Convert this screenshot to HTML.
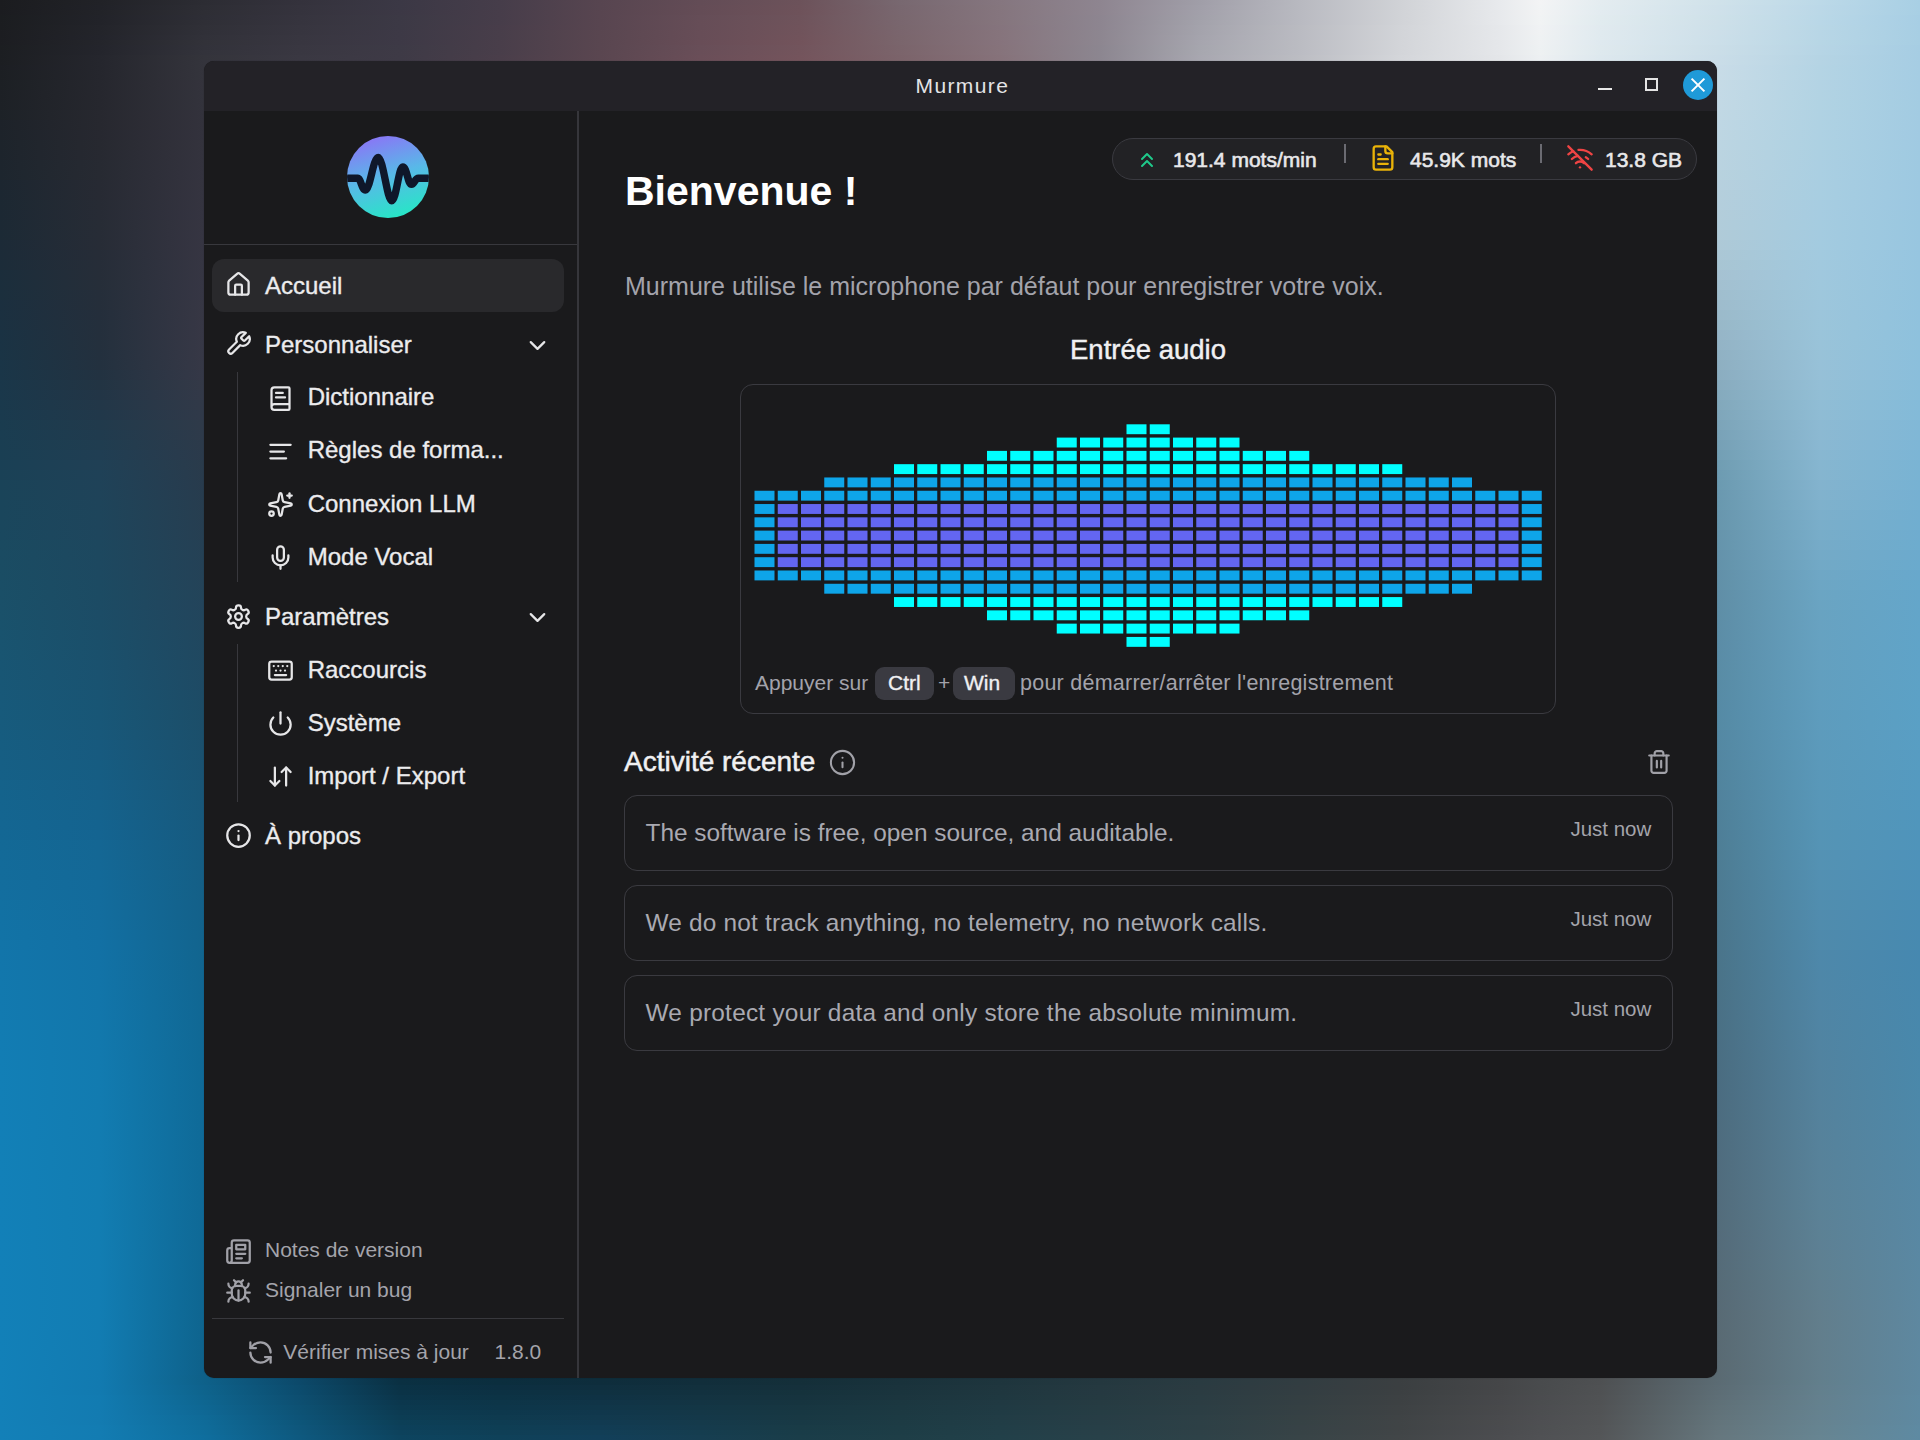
<!DOCTYPE html>
<html><head><meta charset="utf-8">
<style>
html,body{margin:0;padding:0;width:1920px;height:1440px;overflow:hidden;}
body{position:relative;font-family:"Liberation Sans",sans-serif;background:#1b1c1f;}
#bgm{position:absolute;left:0;top:0;width:1920px;height:1440px;}
#bgm div{position:absolute;left:0;width:1920px;}
.abs{position:absolute;}
.t{position:absolute;white-space:nowrap;line-height:1;}
.m{-webkit-text-stroke:0.35px currentColor;}
.sb{-webkit-text-stroke:0.6px currentColor;}
#win{position:absolute;left:204px;top:61px;width:1513px;height:1317px;background:#1a1a1c;border-radius:10px;overflow:hidden;
box-shadow:0 0 1px rgba(0,0,0,0.4);}
#titlebar{position:absolute;left:0;top:0;width:1513px;height:50px;background:#232227;}
svg.ic{position:absolute;fill:none;stroke-linecap:round;stroke-linejoin:round;}
</style></head>
<body>
<div id="bgm"><div style="top:0px;height:5px;background:linear-gradient(90deg,#1b1c1f 0px,#212227 100px,#2c2c33 204px,#34323c 300px,#3b3845 400px,#463d4a 500px,#574550 600px,#634c56 700px,#6c525a 800px,#786870 900px,#85767f 1000px,#8e8590 1100px,#a09ea8 1200px,#b8b9c0 1300px,#d0d2d6 1400px,#e8eaed 1500px,#f3f4f5 1540px,#e4ecf0 1600px,#d0e2ea 1717px,#bcd9e8 1820px,#a8cfe4 1920px)"></div><div style="top:5px;height:5px;background:linear-gradient(90deg,#1b1c1f 0px,#212228 100px,#2d2d34 204px,#35333d 300px,#3b3845 400px,#463d4a 500px,#574550 600px,#644c56 700px,#6d525a 800px,#78676f 900px,#85767e 1000px,#8e8590 1100px,#a19fa9 1200px,#b8b9c0 1300px,#d0d2d6 1400px,#e8eaed 1500px,#f2f4f5 1540px,#e3ecf0 1600px,#cfe1ea 1717px,#bbd8e8 1820px,#a8cfe4 1920px)"></div><div style="top:10px;height:5px;background:linear-gradient(90deg,#1b1c20 0px,#222328 100px,#2e2e35 204px,#35333d 300px,#3c3845 400px,#473d4a 500px,#584550 600px,#644c56 700px,#6e525a 800px,#79676f 900px,#85757e 1000px,#8e8590 1100px,#a2a0aa 1200px,#b9bac1 1300px,#d1d3d7 1400px,#e7e9ec 1500px,#f2f3f4 1540px,#e3ebf0 1600px,#cfe1ea 1717px,#bbd8e7 1820px,#a8cfe4 1920px)"></div><div style="top:15px;height:5px;background:linear-gradient(90deg,#1b1d20 0px,#222329 100px,#2e2e36 204px,#36343e 300px,#3c3945 400px,#473d4a 500px,#584550 600px,#654d57 700px,#6e535b 800px,#79676e 900px,#85757e 1000px,#8d8590 1100px,#a2a1aa 1200px,#b9bac1 1300px,#d1d3d7 1400px,#e7e9ec 1500px,#f1f3f4 1540px,#e2ebef 1600px,#cee1e9 1717px,#bad8e7 1820px,#a7cee4 1920px)"></div><div style="top:20px;height:5px;background:linear-gradient(90deg,#1b1d20 0px,#222329 100px,#2f2f36 204px,#36343e 300px,#3c3945 400px,#473d4a 500px,#584550 600px,#664d57 700px,#6f535b 800px,#79666e 900px,#85757d 1000px,#8d8590 1100px,#a3a2ab 1200px,#b9bac1 1300px,#d1d3d7 1400px,#e7e9ec 1500px,#f1f3f4 1540px,#e1ebef 1600px,#cee0e9 1717px,#b9d7e7 1820px,#a7cee4 1920px)"></div><div style="top:25px;height:5px;background:linear-gradient(90deg,#1b1d20 0px,#23242a 100px,#303037 204px,#37353f 300px,#3c3945 400px,#483d4a 500px,#584550 600px,#664d57 700px,#70535b 800px,#79666d 900px,#85747d 1000px,#8d8590 1100px,#a4a3ac 1200px,#babbc1 1300px,#d2d4d8 1400px,#e6e8eb 1500px,#f0f2f4 1540px,#e1eaef 1600px,#cde0e9 1717px,#b9d7e6 1820px,#a7cee4 1920px)"></div><div style="top:30px;height:5px;background:linear-gradient(90deg,#1c1d21 0px,#23242a 100px,#303038 204px,#37353f 300px,#3d3946 400px,#483e4a 500px,#594650 600px,#674d57 700px,#70535b 800px,#7a656d 900px,#86747c 1000px,#8d8690 1100px,#a4a3ac 1200px,#babbc2 1300px,#d2d4d8 1400px,#e6e8eb 1500px,#f0f2f3 1540px,#e0eaef 1600px,#cddfe9 1717px,#b8d6e6 1820px,#a7cee3 1920px)"></div><div style="top:35px;height:5px;background:linear-gradient(90deg,#1c1d21 0px,#23242b 100px,#313139 204px,#383640 300px,#3d3946 400px,#483e4a 500px,#594650 600px,#674d57 700px,#71535b 800px,#7a656c 900px,#86747c 1000px,#8d8690 1100px,#a5a4ad 1200px,#babbc2 1300px,#d2d4d8 1400px,#e6e8eb 1500px,#eff2f3 1540px,#e0eaef 1600px,#ccdfe9 1717px,#b8d6e6 1820px,#a7cee3 1920px)"></div><div style="top:40px;height:5px;background:linear-gradient(90deg,#1c1d21 0px,#24252b 100px,#323239 204px,#383640 300px,#3d3946 400px,#493e4a 500px,#594650 600px,#684d57 700px,#72535b 800px,#7a656c 900px,#86737c 1000px,#8d8690 1100px,#a6a5ae 1200px,#bbbcc2 1300px,#d3d5d9 1400px,#e5e7ea 1500px,#eff1f3 1540px,#dfe9ef 1600px,#ccdfe9 1717px,#b7d6e5 1820px,#a7cee3 1920px)"></div><div style="top:45px;height:5px;background:linear-gradient(90deg,#1c1e21 0px,#24252c 100px,#32323a 204px,#393741 300px,#3d3a46 400px,#493e4a 500px,#594650 600px,#684e58 700px,#72545c 800px,#7a646b 900px,#86737b 1000px,#8c8690 1100px,#a6a6ae 1200px,#bbbcc2 1300px,#d3d5d9 1400px,#e5e7ea 1500px,#eef1f3 1540px,#dfe9ee 1600px,#cbdee8 1717px,#b7d5e5 1820px,#a6cde3 1920px)"></div><div style="top:50px;height:5px;background:linear-gradient(90deg,#1c1e22 0px,#24252c 100px,#33333b 204px,#393741 300px,#3e3a46 400px,#493e4a 500px,#5a4650 600px,#694e58 700px,#73545c 800px,#7b646b 900px,#86737b 1000px,#8c8690 1100px,#a7a7af 1200px,#bbbcc3 1300px,#d3d5d9 1400px,#e5e7ea 1500px,#eef1f2 1540px,#dee9ee 1600px,#cbdee8 1717px,#b6d5e5 1820px,#a6cde3 1920px)"></div><div style="top:55px;height:5px;background:linear-gradient(90deg,#1c1e22 0px,#25262d 100px,#34343b 204px,#3a3842 300px,#3e3a46 400px,#4a3e4a 500px,#5a4650 600px,#6a4e58 700px,#74545c 800px,#7b636a 900px,#86727a 1000px,#8c8690 1100px,#a8a7b0 1200px,#bcbdc3 1300px,#d4d6da 1400px,#e4e6e9 1500px,#edf0f2 1540px,#dde8ee 1600px,#cadde8 1717px,#b5d4e4 1820px,#a6cde3 1920px)"></div><div style="top:60px;height:5px;background:linear-gradient(90deg,#1c1e22 0px,#25262d 100px,#34343c 204px,#3a3842 300px,#3e3a46 400px,#4a3f4a 500px,#5a4751 600px,#6a4f59 700px,#74555d 800px,#7b646b 900px,#86737b 1000px,#8c8690 1100px,#a7a8b0 1200px,#bbbdc3 1300px,#d3d5d9 1400px,#e3e5e8 1500px,#ebeff1 1540px,#dce7ed 1600px,#cadde8 1717px,#b5d4e4 1820px,#a6cde3 1920px)"></div><div style="top:65px;height:5px;background:linear-gradient(90deg,#1c1e23 0px,#25262d 100px,#34343c 204px,#3a3843 300px,#3f3b47 400px,#4b404c 500px,#5a4953 600px,#69515b 700px,#735760 800px,#7a666d 900px,#85757d 1000px,#8b8892 1100px,#a5a7af 1200px,#b8bbc2 1300px,#cfd2d7 1400px,#dee2e6 1500px,#e6ebee 1540px,#d9e5eb 1600px,#c9dce8 1717px,#b4d4e4 1820px,#a6cde3 1920px)"></div><div style="top:70px;height:10px;background:linear-gradient(90deg,#1c1f23 0px,#25262d 100px,#34343c 204px,#c8dce7 1717px,#b4d4e4 1820px,#a5cde3 1920px)"></div><div style="top:80px;height:10px;background:linear-gradient(90deg,#1c2024 0px,#26272e 100px,#34333c 204px,#c6dbe6 1717px,#b3d3e4 1820px,#a4cce3 1920px)"></div><div style="top:90px;height:10px;background:linear-gradient(90deg,#1d2025 0px,#26272e 100px,#33333c 204px,#c4dae6 1717px,#b2d3e3 1820px,#a4cce2 1920px)"></div><div style="top:100px;height:10px;background:linear-gradient(90deg,#1d2126 0px,#26272e 100px,#33333c 204px,#c3d9e5 1717px,#b1d3e3 1820px,#a3cce2 1920px)"></div><div style="top:110px;height:10px;background:linear-gradient(90deg,#1d2227 0px,#27282f 100px,#33323c 204px,#c1d8e4 1717px,#b0d2e3 1820px,#a2cbe2 1920px)"></div><div style="top:120px;height:10px;background:linear-gradient(90deg,#1d2229 0px,#27282f 100px,#33323c 204px,#bfd7e4 1717px,#afd2e3 1820px,#a2cbe2 1920px)"></div><div style="top:130px;height:10px;background:linear-gradient(90deg,#1d232a 0px,#272830 100px,#33323d 204px,#bed6e2 1717px,#aed1e3 1820px,#a1cae2 1920px)"></div><div style="top:140px;height:10px;background:linear-gradient(90deg,#1d242b 0px,#272930 100px,#34333d 204px,#bcd5e2 1717px,#add1e2 1820px,#a0cae2 1920px)"></div><div style="top:150px;height:10px;background:linear-gradient(90deg,#1d242c 0px,#272931 100px,#34333e 204px,#bbd4e0 1717px,#acd0e2 1820px,#9fcae1 1920px)"></div><div style="top:160px;height:10px;background:linear-gradient(90deg,#1d252d 0px,#272a32 100px,#34333e 204px,#bad3e0 1717px,#abcfe2 1820px,#9ec9e1 1920px)"></div><div style="top:170px;height:10px;background:linear-gradient(90deg,#1d262e 0px,#272a32 100px,#34333f 204px,#b8d2de 1717px,#aacfe2 1820px,#9dc9e1 1920px)"></div><div style="top:180px;height:10px;background:linear-gradient(90deg,#1c2630 0px,#272a33 100px,#35343f 204px,#b7d0de 1717px,#a9cee1 1820px,#9dc8e1 1920px)"></div><div style="top:190px;height:10px;background:linear-gradient(90deg,#1c2731 0px,#272a33 100px,#353440 204px,#b5cfdc 1717px,#a8cee1 1820px,#9cc8e1 1920px)"></div><div style="top:200px;height:10px;background:linear-gradient(90deg,#1c2832 0px,#272b34 100px,#353440 204px,#b4cedc 1717px,#a7cde1 1820px,#9bc7e1 1920px)"></div><div style="top:210px;height:10px;background:linear-gradient(90deg,#1c2833 0px,#272b35 100px,#353441 204px,#b3cdda 1717px,#a6cce1 1820px,#9ac7e0 1920px)"></div><div style="top:220px;height:10px;background:linear-gradient(90deg,#1c2934 0px,#272c35 100px,#363541 204px,#b1ccda 1717px,#a5cce0 1820px,#99c7e0 1920px)"></div><div style="top:230px;height:10px;background:linear-gradient(90deg,#1c2a35 0px,#272c36 100px,#363542 204px,#b0cbd8 1717px,#a4cbe0 1820px,#98c6e0 1920px)"></div><div style="top:240px;height:10px;background:linear-gradient(90deg,#1c2a37 0px,#272c36 100px,#363542 204px,#aec9d7 1717px,#a3cbe0 1820px,#98c6e0 1920px)"></div><div style="top:250px;height:10px;background:linear-gradient(90deg,#1c2b38 0px,#262c37 100px,#363542 204px,#abc7d5 1717px,#a2cadf 1820px,#96c5e0 1920px)"></div><div style="top:260px;height:10px;background:linear-gradient(90deg,#1c2c39 0px,#262d38 100px,#363643 204px,#a8c5d3 1717px,#a1c9de 1820px,#96c5df 1920px)"></div><div style="top:270px;height:10px;background:linear-gradient(90deg,#1b2d3b 0px,#262d38 100px,#363643 204px,#a6c2d2 1717px,#a0c8de 1820px,#94c4df 1920px)"></div><div style="top:280px;height:10px;background:linear-gradient(90deg,#1b2e3c 0px,#262e39 100px,#363644 204px,#a3c0d0 1717px,#9fc8dd 1820px,#94c4de 1920px)"></div><div style="top:290px;height:10px;background:linear-gradient(90deg,#1b2f3d 0px,#252e3a 100px,#363644 204px,#a0bece 1717px,#9ec7dc 1820px,#92c3de 1920px)"></div><div style="top:300px;height:10px;background:linear-gradient(90deg,#1b2f3f 0px,#252e3a 100px,#373744 204px,#9ebccc 1717px,#9dc6dc 1820px,#92c3de 1920px)"></div><div style="top:310px;height:10px;background:linear-gradient(90deg,#1b3040 0px,#242e3b 100px,#373744 204px,#9bbaca 1717px,#9cc5db 1820px,#90c2de 1920px)"></div><div style="top:320px;height:10px;background:linear-gradient(90deg,#1b3141 0px,#242f3c 100px,#373745 204px,#98b8c8 1717px,#9bc5da 1820px,#90c2dd 1920px)"></div><div style="top:330px;height:10px;background:linear-gradient(90deg,#1a3243 0px,#242f3c 100px,#373745 204px,#96b5c7 1717px,#9ac4da 1820px,#8ec1dd 1920px)"></div><div style="top:340px;height:10px;background:linear-gradient(90deg,#1a3344 0px,#24303d 100px,#373846 204px,#93b3c5 1717px,#99c3d9 1820px,#8ec1dc 1920px)"></div><div style="top:350px;height:10px;background:linear-gradient(90deg,#1a3445 0px,#23303e 100px,#373846 204px,#90b1c3 1717px,#98c2d8 1820px,#8cc0dc 1920px)"></div><div style="top:360px;height:10px;background:linear-gradient(90deg,#1a3547 0px,#23313f 100px,#363846 204px,#8eafc1 1717px,#97c1d8 1820px,#8bbfdc 1920px)"></div><div style="top:370px;height:10px;background:linear-gradient(90deg,#1a3648 0px,#223241 100px,#353847 204px,#8badc0 1717px,#96c0d7 1820px,#8abedb 1920px)"></div><div style="top:380px;height:10px;background:linear-gradient(90deg,#1a374a 0px,#223443 100px,#343947 204px,#88abbe 1717px,#94bfd6 1820px,#88bdda 1920px)"></div><div style="top:390px;height:10px;background:linear-gradient(90deg,#1a384b 0px,#223546 100px,#333948 204px,#85aabd 1717px,#92bed5 1820px,#86bcd9 1920px)"></div><div style="top:400px;height:10px;background:linear-gradient(90deg,#1a394c 0px,#223748 100px,#313948 204px,#82a8bb 1717px,#90bdd5 1820px,#84bbd9 1920px)"></div><div style="top:410px;height:10px;background:linear-gradient(90deg,#1a3a4e 0px,#21384a 100px,#303949 204px,#7fa6ba 1717px,#8fbcd4 1820px,#83bad8 1920px)"></div><div style="top:420px;height:10px;background:linear-gradient(90deg,#1a3c4f 0px,#213a4c 100px,#2f3a49 204px,#7ca4b8 1717px,#8dbad3 1820px,#81b8d7 1920px)"></div><div style="top:430px;height:10px;background:linear-gradient(90deg,#1a3d51 0px,#203b4e 100px,#2e3a4a 204px,#79a2b7 1717px,#8cb9d2 1820px,#80b7d6 1920px)"></div><div style="top:440px;height:10px;background:linear-gradient(90deg,#1a3e52 0px,#203d50 100px,#2c3a4a 204px,#76a0b5 1717px,#8ab8d2 1820px,#7eb6d6 1920px)"></div><div style="top:450px;height:10px;background:linear-gradient(90deg,#1a3f53 0px,#203e53 100px,#2b3a4b 204px,#739fb4 1717px,#88b7d1 1820px,#7cb5d5 1920px)"></div><div style="top:460px;height:10px;background:linear-gradient(90deg,#1a4055 0px,#204055 100px,#2a3b4b 204px,#709db2 1717px,#86b6d0 1820px,#7ab4d4 1920px)"></div><div style="top:470px;height:10px;background:linear-gradient(90deg,#1a4156 0px,#1f4157 100px,#293b4c 204px,#6d9bb1 1717px,#85b5cf 1820px,#79b3d3 1920px)"></div><div style="top:480px;height:10px;background:linear-gradient(90deg,#1a4358 0px,#1f4258 100px,#283b4d 204px,#6b9ab0 1717px,#83b3ce 1820px,#77b2d3 1920px)"></div><div style="top:490px;height:10px;background:linear-gradient(90deg,#1a4459 0px,#1f4359 100px,#273c4e 204px,#6a98af 1717px,#81b2cd 1820px,#76b0d2 1920px)"></div><div style="top:500px;height:10px;background:linear-gradient(90deg,#1a455b 0px,#1e445a 100px,#273d4f 204px,#6998ae 1717px,#7fb1cc 1820px,#74b0d1 1920px)"></div><div style="top:510px;height:10px;background:linear-gradient(90deg,#1a465c 0px,#1e455b 100px,#273e50 204px,#6896ad 1717px,#7cafcb 1820px,#72aed0 1920px)"></div><div style="top:520px;height:10px;background:linear-gradient(90deg,#1a475d 0px,#1e455c 100px,#263e51 204px,#6796ac 1717px,#7aaeca 1820px,#70aed0 1920px)"></div><div style="top:530px;height:10px;background:linear-gradient(90deg,#1a485f 0px,#1e465d 100px,#263f52 204px,#6694ab 1717px,#78adc9 1820px,#6faccf 1920px)"></div><div style="top:540px;height:10px;background:linear-gradient(90deg,#1a4a60 0px,#1d475e 100px,#254054 204px,#6594ab 1717px,#76abc8 1820px,#6dacce 1920px)"></div><div style="top:550px;height:10px;background:linear-gradient(90deg,#1a4b62 0px,#1d485f 100px,#254155 204px,#6492aa 1717px,#74aac7 1820px,#6caacd 1920px)"></div><div style="top:560px;height:10px;background:linear-gradient(90deg,#1a4c63 0px,#1d4860 100px,#244156 204px,#6392a9 1717px,#72a9c6 1820px,#6aaacd 1920px)"></div><div style="top:570px;height:10px;background:linear-gradient(90deg,#1a4d64 0px,#1d4961 100px,#244257 204px,#6290a8 1717px,#6fa7c5 1820px,#68a8cc 1920px)"></div><div style="top:580px;height:10px;background:linear-gradient(90deg,#1a4e66 0px,#1c4a62 100px,#244358 204px,#6190a7 1717px,#6da6c4 1820px,#66a8cb 1920px)"></div><div style="top:590px;height:10px;background:linear-gradient(90deg,#1a4f67 0px,#1c4b63 100px,#234459 204px,#608ea6 1717px,#6ba5c3 1820px,#65a6ca 1920px)"></div><div style="top:600px;height:10px;background:linear-gradient(90deg,#1a5069 0px,#1c4b64 100px,#23445b 204px,#5f8ea6 1717px,#6aa4c2 1820px,#64a6ca 1920px)"></div><div style="top:610px;height:10px;background:linear-gradient(90deg,#1a516a 0px,#1c4c66 100px,#22455c 204px,#5e8ea6 1717px,#68a3c1 1820px,#63a5c9 1920px)"></div><div style="top:620px;height:10px;background:linear-gradient(90deg,#19526c 0px,#1b4d67 100px,#22465d 204px,#5d8da6 1717px,#68a2c1 1820px,#62a5c9 1920px)"></div><div style="top:630px;height:10px;background:linear-gradient(90deg,#19536e 0px,#1b4e69 100px,#21475e 204px,#5c8da6 1717px,#66a2c1 1820px,#61a4c9 1920px)"></div><div style="top:640px;height:10px;background:linear-gradient(90deg,#195470 0px,#1a4f6a 100px,#20475f 204px,#5b8ca6 1717px,#66a1c0 1820px,#60a4c8 1920px)"></div><div style="top:650px;height:10px;background:linear-gradient(90deg,#195571 0px,#1a506c 100px,#204860 204px,#5a8ca6 1717px,#64a0c0 1820px,#5fa3c8 1920px)"></div><div style="top:660px;height:10px;background:linear-gradient(90deg,#185573 0px,#1a516e 100px,#1f4962 204px,#5a8ca5 1717px,#64a0bf 1820px,#5fa3c7 1920px)"></div><div style="top:670px;height:10px;background:linear-gradient(90deg,#185674 0px,#1a5270 100px,#1f4a63 204px,#598ca5 1717px,#629fbf 1820px,#5ea2c7 1920px)"></div><div style="top:680px;height:10px;background:linear-gradient(90deg,#185776 0px,#195371 100px,#1e4a64 204px,#588ba5 1717px,#629ebe 1820px,#5da2c6 1920px)"></div><div style="top:690px;height:10px;background:linear-gradient(90deg,#185878 0px,#195473 100px,#1d4b65 204px,#578ba5 1717px,#609ebe 1820px,#5ca1c6 1920px)"></div><div style="top:700px;height:10px;background:linear-gradient(90deg,#17597a 0px,#185574 100px,#1d4c66 204px,#568aa5 1717px,#609dbe 1820px,#5ba1c6 1920px)"></div><div style="top:710px;height:10px;background:linear-gradient(90deg,#175a7b 0px,#185676 100px,#1c4d67 204px,#558aa5 1717px,#5e9cbd 1820px,#5aa0c5 1920px)"></div><div style="top:720px;height:10px;background:linear-gradient(90deg,#175b7d 0px,#185778 100px,#1c4e69 204px,#558aa4 1717px,#5e9cbd 1820px,#5aa0c5 1920px)"></div><div style="top:730px;height:10px;background:linear-gradient(90deg,#165c7f 0px,#18587a 100px,#1b4f6b 204px,#5488a3 1717px,#5d9bbc 1820px,#599ec4 1920px)"></div><div style="top:740px;height:10px;background:linear-gradient(90deg,#165d81 0px,#17597d 100px,#1b506d 204px,#5488a2 1717px,#5c9abb 1820px,#589ec3 1920px)"></div><div style="top:750px;height:10px;background:linear-gradient(90deg,#165e83 0px,#175a7f 100px,#1a516f 204px,#5386a1 1717px,#5b9abb 1820px,#579cc2 1920px)"></div><div style="top:760px;height:10px;background:linear-gradient(90deg,#165f85 0px,#165c81 100px,#1a5271 204px,#52869f 1717px,#5b99ba 1820px,#569cc1 1920px)"></div><div style="top:770px;height:10px;background:linear-gradient(90deg,#156087 0px,#165d83 100px,#195373 204px,#52849e 1717px,#5a98b9 1820px,#559ac0 1920px)"></div><div style="top:780px;height:10px;background:linear-gradient(90deg,#15628a 0px,#165e86 100px,#195575 204px,#51849d 1717px,#5998b9 1820px,#549ac0 1920px)"></div><div style="top:790px;height:10px;background:linear-gradient(90deg,#14638c 0px,#165f88 100px,#185677 204px,#51829c 1717px,#5897b8 1820px,#5398bf 1920px)"></div><div style="top:800px;height:10px;background:linear-gradient(90deg,#14648e 0px,#15618a 100px,#185779 204px,#50829a 1717px,#5896b7 1820px,#5298be 1920px)"></div><div style="top:810px;height:10px;background:linear-gradient(90deg,#146590 0px,#15628c 100px,#17587b 204px,#4f8099 1717px,#5796b7 1820px,#5196bd 1920px)"></div><div style="top:820px;height:10px;background:linear-gradient(90deg,#146692 0px,#14638f 100px,#17597d 204px,#4f8098 1717px,#5695b6 1820px,#5096bc 1920px)"></div><div style="top:830px;height:10px;background:linear-gradient(90deg,#136794 0px,#146491 100px,#165a7f 204px,#4e7e97 1717px,#5594b5 1820px,#4f94bb 1920px)"></div><div style="top:840px;height:10px;background:linear-gradient(90deg,#136996 0px,#146693 100px,#165b81 204px,#4e7e95 1717px,#5594b5 1820px,#4f94ba 1920px)"></div><div style="top:850px;height:10px;background:linear-gradient(90deg,#136a98 0px,#146794 100px,#155c82 204px,#4e7d94 1717px,#5492b4 1820px,#4e92ba 1920px)"></div><div style="top:860px;height:10px;background:linear-gradient(90deg,#136b9a 0px,#146896 100px,#155d83 204px,#4d7c93 1717px,#5492b3 1820px,#4d92b8 1920px)"></div><div style="top:870px;height:10px;background:linear-gradient(90deg,#136c9b 0px,#136998 100px,#155e85 204px,#4d7b92 1717px,#5390b2 1820px,#4c90b8 1920px)"></div><div style="top:880px;height:10px;background:linear-gradient(90deg,#136d9d 0px,#136a9a 100px,#145f86 204px,#4c7a91 1717px,#5290b1 1820px,#4c90b6 1920px)"></div><div style="top:890px;height:10px;background:linear-gradient(90deg,#136e9f 0px,#136b9b 100px,#146087 204px,#4c7990 1717px,#528eb0 1820px,#4b8eb6 1920px)"></div><div style="top:900px;height:10px;background:linear-gradient(90deg,#1270a1 0px,#136c9d 100px,#136089 204px,#4c798f 1717px,#518eaf 1820px,#4a8eb4 1920px)"></div><div style="top:910px;height:10px;background:linear-gradient(90deg,#1271a3 0px,#136d9e 100px,#13618a 204px,#4c788e 1717px,#518cae 1820px,#498cb4 1920px)"></div><div style="top:920px;height:10px;background:linear-gradient(90deg,#1272a5 0px,#136ea0 100px,#12628b 204px,#4b778d 1717px,#508cad 1820px,#498cb2 1920px)"></div><div style="top:930px;height:10px;background:linear-gradient(90deg,#1273a6 0px,#126fa2 100px,#12638d 204px,#4b768c 1717px,#4f8aac 1820px,#488ab2 1920px)"></div><div style="top:940px;height:10px;background:linear-gradient(90deg,#1274a8 0px,#1270a4 100px,#12648e 204px,#4a758b 1717px,#4f8aab 1820px,#478ab0 1920px)"></div><div style="top:950px;height:10px;background:linear-gradient(90deg,#1275aa 0px,#1271a5 100px,#11658f 204px,#4a748a 1717px,#4e88aa 1820px,#4688b0 1920px)"></div><div style="top:960px;height:10px;background:linear-gradient(90deg,#1276ab 0px,#1272a6 100px,#116590 204px,#4a7489 1717px,#4e88aa 1820px,#4688af 1920px)"></div><div style="top:970px;height:10px;background:linear-gradient(90deg,#1277ac 0px,#1273a7 100px,#116691 204px,#4a7388 1717px,#4e87a8 1820px,#4688ae 1920px)"></div><div style="top:980px;height:10px;background:linear-gradient(90deg,#1278ad 0px,#1274a8 100px,#116692 204px,#4a7287 1717px,#4f87a8 1820px,#4788ae 1920px)"></div><div style="top:990px;height:10px;background:linear-gradient(90deg,#1279ae 0px,#1275a9 100px,#106692 204px,#4a7286 1717px,#4f86a6 1820px,#4788ae 1920px)"></div><div style="top:1000px;height:10px;background:linear-gradient(90deg,#1279af 0px,#1275aa 100px,#106793 204px,#4a7186 1717px,#5086a6 1820px,#4888ad 1920px)"></div><div style="top:1010px;height:10px;background:linear-gradient(90deg,#127ab0 0px,#1276ab 100px,#106794 204px,#4a7085 1717px,#5085a4 1820px,#4888ad 1920px)"></div><div style="top:1020px;height:10px;background:linear-gradient(90deg,#127bb1 0px,#1277ab 100px,#106894 204px,#4a7084 1717px,#5085a4 1820px,#4888ac 1920px)"></div><div style="top:1030px;height:10px;background:linear-gradient(90deg,#127cb2 0px,#1278ac 100px,#106895 204px,#4a6f83 1717px,#5084a2 1820px,#4888ac 1920px)"></div><div style="top:1040px;height:10px;background:linear-gradient(90deg,#127cb3 0px,#1278ad 100px,#106996 204px,#4a6e83 1717px,#5184a2 1820px,#4988ab 1920px)"></div><div style="top:1050px;height:10px;background:linear-gradient(90deg,#127db4 0px,#1279ae 100px,#0f6996 204px,#4a6e82 1717px,#5183a0 1820px,#4988ab 1920px)"></div><div style="top:1060px;height:10px;background:linear-gradient(90deg,#127eb5 0px,#127aaf 100px,#0f6997 204px,#4a6d81 1717px,#5283a0 1820px,#4a88ab 1920px)"></div><div style="top:1070px;height:10px;background:linear-gradient(90deg,#127fb6 0px,#127bb0 100px,#0f6a98 204px,#4a6c80 1717px,#52829e 1820px,#4a88aa 1920px)"></div><div style="top:1080px;height:10px;background:linear-gradient(90deg,#127fb6 0px,#127bb0 100px,#0f6a98 204px,#4a6c80 1717px,#52829e 1820px,#4a88aa 1920px)"></div><div style="top:1090px;height:10px;background:linear-gradient(90deg,#127fb6 0px,#127bb0 100px,#0f6a98 204px,#4b6c80 1717px,#53829d 1820px,#4c88a9 1920px)"></div><div style="top:1100px;height:10px;background:linear-gradient(90deg,#127fb6 0px,#127bb0 100px,#0f6a98 204px,#4c6c7f 1717px,#54829d 1820px,#4c88a9 1920px)"></div><div style="top:1110px;height:10px;background:linear-gradient(90deg,#127fb7 0px,#127cb1 100px,#0f6a98 204px,#4c6c7f 1717px,#54829c 1820px,#4e88a9 1920px)"></div><div style="top:1120px;height:10px;background:linear-gradient(90deg,#127fb7 0px,#127cb1 100px,#0f6a98 204px,#4d6c7e 1717px,#55829c 1820px,#4e88a8 1920px)"></div><div style="top:1130px;height:10px;background:linear-gradient(90deg,#127fb7 0px,#127cb1 100px,#0f6a98 204px,#4e6c7e 1717px,#56829b 1820px,#5088a8 1920px)"></div><div style="top:1140px;height:10px;background:linear-gradient(90deg,#1280b7 0px,#127cb1 100px,#0f6a98 204px,#4e6c7e 1717px,#56829b 1820px,#5088a7 1920px)"></div><div style="top:1150px;height:10px;background:linear-gradient(90deg,#1280b7 0px,#127cb1 100px,#0f6a98 204px,#4f6c7e 1717px,#57829a 1820px,#5288a7 1920px)"></div><div style="top:1160px;height:10px;background:linear-gradient(90deg,#1280b7 0px,#127cb1 100px,#0f6a98 204px,#506c7d 1717px,#58829a 1820px,#5288a6 1920px)"></div><div style="top:1170px;height:10px;background:linear-gradient(90deg,#1280b8 0px,#127db2 100px,#0f6a98 204px,#506c7d 1717px,#588299 1820px,#5488a6 1920px)"></div><div style="top:1180px;height:10px;background:linear-gradient(90deg,#1280b8 0px,#127db2 100px,#0f6a98 204px,#516c7c 1717px,#598299 1820px,#5488a6 1920px)"></div><div style="top:1190px;height:10px;background:linear-gradient(90deg,#1280b8 0px,#127db2 100px,#0f6a98 204px,#526c7c 1717px,#5a8298 1820px,#5688a5 1920px)"></div><div style="top:1200px;height:10px;background:linear-gradient(90deg,#1280b8 0px,#127db2 100px,#0f6a98 204px,#526c7c 1717px,#5a8298 1820px,#5688a5 1920px)"></div><div style="top:1210px;height:10px;background:linear-gradient(90deg,#1280b8 0px,#127db2 100px,#0f6997 204px,#536c7b 1717px,#5b8296 1820px,#5788a4 1920px)"></div><div style="top:1220px;height:10px;background:linear-gradient(90deg,#1280b8 0px,#127db2 100px,#0f6996 204px,#536c7a 1717px,#5c8196 1820px,#5888a4 1920px)"></div><div style="top:1230px;height:10px;background:linear-gradient(90deg,#1280b8 0px,#127db2 100px,#0f6996 204px,#546b7a 1717px,#5c8194 1820px,#5888a4 1920px)"></div><div style="top:1240px;height:10px;background:linear-gradient(90deg,#1280b8 0px,#127db2 100px,#0f6895 204px,#546b79 1717px,#5d8094 1820px,#5988a3 1920px)"></div><div style="top:1250px;height:10px;background:linear-gradient(90deg,#1280b8 0px,#127db2 100px,#0f6894 204px,#556b78 1717px,#5e8092 1820px,#5a88a3 1920px)"></div><div style="top:1260px;height:10px;background:linear-gradient(90deg,#1280b8 0px,#127db3 100px,#0e6794 204px,#556b78 1717px,#5e8092 1820px,#5a88a2 1920px)"></div><div style="top:1270px;height:10px;background:linear-gradient(90deg,#1280b8 0px,#127db3 100px,#0e6793 204px,#566b77 1717px,#5f8090 1820px,#5b88a2 1920px)"></div><div style="top:1280px;height:10px;background:linear-gradient(90deg,#1280b8 0px,#127db3 100px,#0e6692 204px,#566b76 1717px,#607f90 1820px,#5c88a1 1920px)"></div><div style="top:1290px;height:10px;background:linear-gradient(90deg,#1280b8 0px,#127db3 100px,#0e6692 204px,#576a76 1717px,#607f8e 1820px,#5c88a1 1920px)"></div><div style="top:1300px;height:10px;background:linear-gradient(90deg,#1280b8 0px,#127db3 100px,#0e6691 204px,#576a75 1717px,#617e8e 1820px,#5d88a1 1920px)"></div><div style="top:1310px;height:10px;background:linear-gradient(90deg,#1280b8 0px,#127db3 100px,#0e6590 204px,#586a74 1717px,#627e8c 1820px,#5e88a0 1920px)"></div><div style="top:1320px;height:10px;background:linear-gradient(90deg,#1280b8 0px,#127db3 100px,#0e658f 204px,#586a74 1717px,#627e8c 1820px,#5e88a0 1920px)"></div><div style="top:1330px;height:10px;background:linear-gradient(90deg,#1280b8 0px,#127cb2 100px,#0e648e 204px,#596a73 1717px,#627e8c 1820px,#5e88a0 1920px)"></div><div style="top:1340px;height:10px;background:linear-gradient(90deg,#1280b8 0px,#127cb2 100px,#0e638d 204px,#596a73 1717px,#627e8c 1820px,#5e88a0 1920px)"></div><div style="top:1350px;height:10px;background:linear-gradient(90deg,#1280b8 0px,#127bb1 100px,#0e628b 204px,#596a73 1717px,#627e8c 1820px,#5e88a0 1920px)"></div><div style="top:1360px;height:10px;background:linear-gradient(90deg,#1280b8 0px,#127bb1 100px,#0e618a 204px,#5a6a72 1717px,#627e8c 1820px,#5e88a0 1920px)"></div><div style="top:1370px;height:5px;background:linear-gradient(90deg,#1280b8 0px,#127ab0 100px,#0e6089 204px,#0d4b6c 300px,#0b3347 400px,#0d3143 500px,#103241 600px,#133240 700px,#16333f 800px,#1b3641 900px,#203943 1000px,#263c44 1100px,#2c3e46 1200px,#344046 1300px,#3b4245 1400px,#45484c 1500px,#494d50 1540px,#4e5255 1600px,#5a6a72 1717px,#627e8c 1820px,#5e88a0 1920px)"></div><div style="top:1375px;height:5px;background:linear-gradient(90deg,#1280b8 0px,#127ab0 100px,#0e6088 204px,#0c4868 300px,#0a2e41 400px,#0b2c3d 500px,#0e2d3b 600px,#112d3a 700px,#142e39 800px,#19313b 900px,#1e343d 1000px,#24373f 1100px,#2a3a41 1200px,#323c41 1300px,#3a3e40 1400px,#444547 1500px,#484a4c 1540px,#4e5052 1600px,#5a6a72 1717px,#627e8c 1820px,#5e88a0 1920px)"></div><div style="top:1380px;height:5px;background:linear-gradient(90deg,#1280b8 0px,#127ab0 100px,#0e618a 204px,#0c496a 300px,#0a3042 400px,#0b2e3e 500px,#0e2d3c 600px,#112e3b 700px,#142f39 800px,#19323b 900px,#1e353d 1000px,#24383f 1100px,#2a3b41 1200px,#323d41 1300px,#3b3f41 1400px,#454648 1500px,#494b4d 1540px,#4e5052 1600px,#5b6b73 1717px,#627f8c 1820px,#5e88a0 1920px)"></div><div style="top:1385px;height:5px;background:linear-gradient(90deg,#1280b8 0px,#127ab0 100px,#0e628c 204px,#0c4b6c 300px,#0a3245 400px,#0c2f41 500px,#0f2f3f 600px,#12303d 700px,#15303b 800px,#1a333c 900px,#1f363e 1000px,#253940 1100px,#2b3b41 1200px,#333d41 1300px,#3b3f41 1400px,#454648 1500px,#494b4d 1540px,#4f5153 1600px,#5c6c74 1717px,#637f8d 1820px,#5e88a0 1920px)"></div><div style="top:1390px;height:5px;background:linear-gradient(90deg,#1280b8 0px,#127ab0 100px,#0e648d 204px,#0c4c6e 300px,#0b3347 400px,#0c3143 500px,#0f3141 600px,#12313f 700px,#15323c 800px,#1a343d 900px,#1f373f 1000px,#253941 1100px,#2b3c42 1200px,#333e42 1300px,#3c4042 1400px,#464749 1500px,#4a4c4e 1540px,#4f5153 1600px,#5d6d75 1717px,#63808d 1820px,#5e88a0 1920px)"></div><div style="top:1395px;height:5px;background:linear-gradient(90deg,#1280b8 0px,#127bb1 100px,#0e658f 204px,#0d4e70 300px,#0b354a 400px,#0c3345 500px,#0f3244 600px,#133341 700px,#16333e 800px,#1b353e 900px,#1f3840 1000px,#253a41 1100px,#2b3d43 1200px,#343f42 1300px,#3d4143 1400px,#47484a 1500px,#4b4c4f 1540px,#505254 1600px,#5e6e76 1717px,#64808e 1820px,#5e89a1 1920px)"></div><div style="top:1400px;height:5px;background:linear-gradient(90deg,#1280b8 0px,#127bb1 100px,#0e6691 204px,#0d4f71 300px,#0b374d 400px,#0d3548 500px,#103447 600px,#133443 700px,#16343f 800px,#1b3740 900px,#203942 1000px,#263b42 1100px,#2c3d43 1200px,#343f43 1300px,#3d4143 1400px,#47484b 1500px,#4b4d4f 1540px,#505254 1600px,#5f7077 1717px,#64818e 1820px,#5e89a1 1920px)"></div><div style="top:1405px;height:5px;background:linear-gradient(90deg,#1280b8 0px,#127bb1 100px,#0e6793 204px,#0d5173 300px,#0b394f 400px,#0d364a 500px,#103649 600px,#133645 700px,#173641 800px,#1b3841 900px,#203a43 1000px,#263c43 1100px,#2c3e44 1200px,#354043 1300px,#3e4244 1400px,#48494b 1500px,#4c4d50 1540px,#515355 1600px,#607178 1717px,#64818f 1820px,#5e89a1 1920px)"></div><div style="top:1410px;height:5px;background:linear-gradient(90deg,#1380b8 0px,#137bb1 100px,#0f6895 204px,#0d5275 300px,#0c3b52 400px,#0d384d 500px,#10374c 600px,#143747 700px,#173742 800px,#1c3942 900px,#203b44 1000px,#263d44 1100px,#2c3e44 1200px,#354044 1300px,#3e4244 1400px,#48494c 1500px,#4c4e50 1540px,#515355 1600px,#617279 1717px,#65828f 1820px,#5e89a1 1920px)"></div><div style="top:1415px;height:5px;background:linear-gradient(90deg,#1380b8 0px,#137bb1 100px,#0f6a97 204px,#0d5377 300px,#0c3d54 400px,#0e3a4f 500px,#11394e 600px,#143849 700px,#183843 800px,#1c3a43 900px,#213c45 1000px,#273d45 1100px,#2d3f45 1200px,#364144 1300px,#3f4345 1400px,#494a4d 1500px,#4d4e51 1540px,#525456 1600px,#62737a 1717px,#658290 1820px,#5e89a1 1920px)"></div><div style="top:1420px;height:5px;background:linear-gradient(90deg,#1380b8 0px,#137bb1 100px,#0f6b99 204px,#0d5579 300px,#0c3f57 400px,#0e3c52 500px,#113a51 600px,#153a4b 700px,#183945 800px,#1d3b44 900px,#213d46 1000px,#273e46 1100px,#2d4046 1200px,#364245 1300px,#404446 1400px,#4a4b4d 1500px,#4e4f52 1540px,#525456 1600px,#63747b 1717px,#668390 1820px,#5e89a1 1920px)"></div><div style="top:1425px;height:5px;background:linear-gradient(90deg,#1380b8 0px,#137cb2 100px,#0f6c9a 204px,#0e567b 300px,#0c405a 400px,#0e3e54 500px,#113c54 600px,#153b4d 700px,#193b46 800px,#1d3c45 900px,#213e47 1000px,#273f47 1100px,#2d4046 1200px,#374246 1300px,#404446 1400px,#4a4b4e 1500px,#4e5052 1540px,#535557 1600px,#64757c 1717px,#668491 1820px,#5e8aa2 1920px)"></div><div style="top:1430px;height:5px;background:linear-gradient(90deg,#1380b8 0px,#137cb2 100px,#0f6d9c 204px,#0e587d 300px,#0d425c 400px,#0f3f56 500px,#123e56 600px,#153d4f 700px,#193c48 800px,#1d3d46 900px,#223f48 1000px,#284048 1100px,#2e4147 1200px,#374346 1300px,#414547 1400px,#4b4c4f 1500px,#4f5053 1540px,#535557 1600px,#65767d 1717px,#668491 1820px,#5e8aa2 1920px)"></div><div style="top:1435px;height:5px;background:linear-gradient(90deg,#1380b8 0px,#137cb2 100px,#0f6e9e 204px,#0e597f 300px,#0d445f 400px,#0f4159 500px,#123f59 600px,#163e51 700px,#1a3d49 800px,#1e3e47 900px,#224049 1000px,#284149 1100px,#2e4248 1200px,#384447 1300px,#424648 1400px,#4c4d50 1500px,#505154 1540px,#545658 1600px,#66777e 1717px,#678592 1820px,#5e8aa2 1920px)"></div></div>
<div id="win">
  <div id="titlebar"></div>
</div>
<!-- everything else absolutely positioned in page coords -->
<div class="t" style="left:915.5px;top:74.6px;font-size:21px;color:#e4e4e6;letter-spacing:1.4px">Murmure</div>
<!-- window controls -->
<div class="abs" style="left:1598px;top:87.5px;width:13.5px;height:2px;background:#e8e8e8"></div>
<div class="abs" style="left:1644.5px;top:77.6px;width:9.6px;height:9.4px;border:2px solid #e4e4e4"></div>
<div class="abs" style="left:1683px;top:69.5px;width:30px;height:30px;border-radius:50%;background:#1f9ad8"></div>
<svg class="ic" style="left:1683px;top:69.5px" width="30" height="30" viewBox="0 0 30 30"><path d="M8.6 8.6L21.4 21.4M21.4 8.6L8.6 21.4" stroke="#ffffff" stroke-width="2" stroke-linecap="butt"/></svg>

<!-- sidebar border & separators -->
<div class="abs" style="left:577px;top:111px;width:1.5px;height:1267px;background:#36363b"></div>
<div class="abs" style="left:204px;top:243.5px;width:373px;height:1.5px;background:#38383d"></div>

<!-- logo -->
<svg class="abs" style="left:347px;top:135.5px" width="82" height="82" viewBox="0 0 100 100">
 <defs>
  <linearGradient id="lg" x1="0.3" y1="0" x2="0.6" y2="1">
   <stop offset="0" stop-color="#8b74f6"/>
   <stop offset="0.5" stop-color="#58b9e8"/>
   <stop offset="1" stop-color="#27e6c6"/>
  </linearGradient>
  <clipPath id="cc"><circle cx="50" cy="50" r="50"/></clipPath>
 </defs>
 <circle cx="50" cy="50" r="50" fill="url(#lg)"/>
 <g clip-path="url(#cc)">
 <path d="M-2,51.6 L13,51.6 C17,51.6 18,66 22.5,66 C28,66 32,26 38,26 C44,26 49,79 54.5,79 C60,79 63,37.7 68,37.7 C73,37.7 74,59 78.7,59 C82,59 83,51.6 87,51.6 L102,51.6" fill="none" stroke="#0f172a" stroke-width="9" stroke-linecap="round" stroke-linejoin="round"/>
 </g>
</svg>

<!-- active item bg -->
<div class="abs" style="left:212px;top:258.5px;width:352px;height:53px;border-radius:12px;background:#29292c"></div>

<!-- nav icons (27px boxes) -->
<svg class="ic" style="left:225px;top:271px" width="27" height="27" viewBox="0 0 24 24" stroke="#e6e6e8" stroke-width="2"><path d="M15 21v-8a1 1 0 0 0-1-1h-4a1 1 0 0 0-1 1v8"/><path d="M3 10a2 2 0 0 1 .709-1.528l7-5.999a2 2 0 0 1 2.582 0l7 5.999A2 2 0 0 1 21 10v9a2 2 0 0 1-2 2H5a2 2 0 0 1-2-2z"/></svg>
<svg class="ic" style="left:225px;top:330px" width="27" height="27" viewBox="0 0 24 24" stroke="#e6e6e8" stroke-width="2"><path d="M14.7 6.3a1 1 0 0 0 0 1.4l1.6 1.6a1 1 0 0 0 1.4 0l3.77-3.77a6 6 0 0 1-7.94 7.94l-6.91 6.91a2.12 2.12 0 0 1-3-3l6.91-6.91a6 6 0 0 1 7.94-7.94l-3.76 3.76z"/></svg>
<svg class="ic" style="left:523.5px;top:331.8px" width="27" height="27" viewBox="0 0 24 24" stroke="#e6e6e8" stroke-width="2"><path d="m6 9 6 6 6-6"/></svg>

<svg class="ic" style="left:266.5px;top:384.5px" width="27" height="27" viewBox="0 0 24 24" stroke="#e6e6e8" stroke-width="2"><path d="M4 19.5v-15A2.5 2.5 0 0 1 6.5 2H19a1 1 0 0 1 1 1v18a1 1 0 0 1-1 1H6.5a1 1 0 0 1 0-5H20"/><path d="M8 11h8"/><path d="M8 7h6"/></svg>
<svg class="ic" style="left:266.5px;top:437.5px" width="27" height="27" viewBox="0 0 24 24" stroke="#e6e6e8" stroke-width="2"><path d="M15 12H3"/><path d="M17 18H3"/><path d="M21 6H3"/></svg>
<svg class="ic" style="left:266.5px;top:490.5px" width="27" height="27" viewBox="0 0 24 24" stroke="#e6e6e8" stroke-width="2"><path d="M11.017 2.814a1 1 0 0 1 1.966 0l1.051 5.558a2 2 0 0 0 1.594 1.594l5.558 1.051a1 1 0 0 1 0 1.966l-5.558 1.051a2 2 0 0 0-1.594 1.594l-1.051 5.558a1 1 0 0 1-1.966 0l-1.051-5.558a2 2 0 0 0-1.594-1.594l-5.558-1.051a1 1 0 0 1 0-1.966l5.558-1.051a2 2 0 0 0 1.594-1.594z"/><path d="M20 2v4"/><path d="M22 4h-4"/><circle cx="4" cy="20" r="2"/></svg>
<svg class="ic" style="left:266.5px;top:543.5px" width="27" height="27" viewBox="0 0 24 24" stroke="#e6e6e8" stroke-width="2"><path d="M12 19v3"/><path d="M19 10v2a7 7 0 0 1-14 0v-2"/><rect x="9" y="2" width="6" height="13" rx="3"/></svg>

<svg class="ic" style="left:225px;top:603px" width="27" height="27" viewBox="0 0 24 24" stroke="#e6e6e8" stroke-width="2"><path d="M12.22 2h-.44a2 2 0 0 0-2 2v.18a2 2 0 0 1-1 1.73l-.43.25a2 2 0 0 1-2 0l-.15-.08a2 2 0 0 0-2.73.73l-.22.38a2 2 0 0 0 .73 2.730l.15.1a2 2 0 0 1 1 1.72v.51a2 2 0 0 1-1 1.74l-.15.09a2 2 0 0 0-.73 2.73l.22.38a2 2 0 0 0 2.73.73l.15-.08a2 2 0 0 1 2 0l.43.25a2 2 0 0 1 1 1.73V20a2 2 0 0 0 2 2h.44a2 2 0 0 0 2-2v-.18a2 2 0 0 1 1-1.73l.43-.25a2 2 0 0 1 2 0l.15.08a2 2 0 0 0 2.73-.73l.22-.39a2 2 0 0 0-.73-2.73l-.15-.08a2 2 0 0 1-1-1.74v-.5a2 2 0 0 1 1-1.74l.15-.09a2 2 0 0 0 .73-2.73l-.22-.38a2 2 0 0 0-2.73-.73l-.15.08a2 2 0 0 1-2 0l-.43-.25a2 2 0 0 1-1-1.73V4a2 2 0 0 0-2-2z"/><circle cx="12" cy="12" r="3"/></svg>
<svg class="ic" style="left:523.5px;top:603.8px" width="27" height="27" viewBox="0 0 24 24" stroke="#e6e6e8" stroke-width="2"><path d="m6 9 6 6 6-6"/></svg>

<svg class="ic" style="left:266.5px;top:656.5px" width="27" height="27" viewBox="0 0 24 24" stroke="#e6e6e8" stroke-width="2"><path d="M10 8h.01"/><path d="M12 12h.01"/><path d="M14 8h.01"/><path d="M16 12h.01"/><path d="M18 8h.01"/><path d="M6 8h.01"/><path d="M7 16h10"/><path d="M8 12h.01"/><rect width="20" height="16" x="2" y="4" rx="2"/></svg>
<svg class="ic" style="left:266.5px;top:709.5px" width="27" height="27" viewBox="0 0 24 24" stroke="#e6e6e8" stroke-width="2"><path d="M12 2v10"/><path d="M18.4 6.6a9 9 0 1 1-12.77.04"/></svg>
<svg class="ic" style="left:266.5px;top:762.5px" width="27" height="27" viewBox="0 0 24 24" stroke="#e6e6e8" stroke-width="2"><path d="m3 16 4 4 4-4"/><path d="M7 20V4"/><path d="m21 8-4-4-4 4"/><path d="M17 4v16"/></svg>
<svg class="ic" style="left:225px;top:822px" width="27" height="27" viewBox="0 0 24 24" stroke="#e6e6e8" stroke-width="2"><circle cx="12" cy="12" r="10"/><path d="M12 16v-4"/><path d="M12 8h.01"/></svg>

<!-- sub-list vertical lines -->
<div class="abs" style="left:236.5px;top:372px;width:1.5px;height:210px;background:#38383d"></div>
<div class="abs" style="left:236.5px;top:644px;width:1.5px;height:158px;background:#38383d"></div>

<!-- nav text -->
<div class="t m" style="left:265px;top:273.7px;font-size:24px;color:#ececee">Accueil</div>
<div class="t m" style="left:265px;top:332.7px;font-size:24px;color:#ececee">Personnaliser</div>
<div class="t m" style="left:307.7px;top:385.4px;font-size:24px;color:#ececee">Dictionnaire</div>
<div class="t m" style="left:307.7px;top:438.3px;font-size:24px;color:#ececee">Règles de forma...</div>
<div class="t m" style="left:307.7px;top:492.1px;font-size:24px;color:#ececee">Connexion LLM</div>
<div class="t m" style="left:307.7px;top:544.7px;font-size:24px;color:#ececee">Mode Vocal</div>
<div class="t m" style="left:265px;top:605.2px;font-size:24px;color:#ececee">Paramètres</div>
<div class="t m" style="left:307.7px;top:658.1px;font-size:24px;color:#ececee">Raccourcis</div>
<div class="t m" style="left:307.7px;top:710.7px;font-size:24px;color:#ececee">Système</div>
<div class="t m" style="left:307.7px;top:763.7px;font-size:24px;color:#ececee">Import / Export</div>
<div class="t m" style="left:265px;top:823.7px;font-size:24px;color:#ececee">À propos</div>

<!-- sidebar footer -->
<svg class="ic" style="left:225px;top:1237.5px" width="27" height="27" viewBox="0 0 24 24" stroke="#a1a1a8" stroke-width="2"><path d="M4 22h16a2 2 0 0 0 2-2V4a2 2 0 0 0-2-2H8a2 2 0 0 0-2 2v16a2 2 0 0 1-2 2Zm0 0a2 2 0 0 1-2-2v-9c0-1.1.9-2 2-2h2"/><path d="M18 14h-8"/><path d="M15 18h-5"/><path d="M10 6h8v4h-8V6Z"/></svg>
<svg class="ic" style="left:225px;top:1278px" width="27" height="27" viewBox="0 0 24 24" stroke="#a1a1a8" stroke-width="2"><path d="m8 2 1.88 1.88"/><path d="M14.12 3.88 16 2"/><path d="M9 7.13v-1a3.003 3.003 0 1 1 6 0v1"/><path d="M12 20c-3.3 0-6-2.7-6-6v-3a4 4 0 0 1 4-4h4a4 4 0 0 1 4 4v3c0 3.3-2.7 6-6 6"/><path d="M12 20v-9"/><path d="M6.53 9C4.6 8.8 3 7.1 3 5"/><path d="M6 13H2"/><path d="M3 21c0-2.1 1.7-3.9 3.8-4"/><path d="M20.97 5c0 2.1-1.6 3.8-3.5 4"/><path d="M22 13h-4"/><path d="M17.2 17c2.1.1 3.8 1.9 3.8 4"/></svg>
<div class="t" style="left:265px;top:1239.2px;font-size:21px;color:#a4a4ab">Notes de version</div>
<div class="t" style="left:265px;top:1279.2px;font-size:21px;color:#a4a4ab">Signaler un bug</div>
<div class="abs" style="left:212px;top:1317.5px;width:352px;height:1.5px;background:#38383d"></div>
<svg class="ic" style="left:246.5px;top:1338.5px" width="27" height="27" viewBox="0 0 24 24" stroke="#a1a1a8" stroke-width="2"><path d="M21 12a9 9 0 0 0-9-9 9.75 9.75 0 0 0-6.74 2.74L3 8"/><path d="M3 3v5h5"/><path d="M3 12a9 9 0 0 0 9 9 9.75 9.75 0 0 0 6.74-2.74L21 16"/><path d="M16 16h5v5"/></svg>
<div class="t" style="left:283.3px;top:1340.7px;font-size:21px;color:#a4a4ab">Vérifier mises à jour</div>
<div class="t" style="left:494.5px;top:1340.7px;font-size:21px;color:#a4a4ab">1.8.0</div>

<!-- main header -->
<div class="t" style="left:625px;top:170.7px;font-size:41px;font-weight:bold;color:#ffffff">Bienvenue !</div>
<div class="t" style="left:625px;top:273.8px;font-size:25px;color:#a3a3ab">Murmure utilise le microphone par défaut pour enregistrer votre voix.</div>

<!-- stats pill -->
<div class="abs" style="left:1112px;top:137.5px;width:585px;height:42px;border-radius:22px;background:#222225;border:1.5px solid #3a3a40;box-sizing:border-box"></div>
<svg class="ic" style="left:1135px;top:147.5px" width="24" height="24" viewBox="0 0 24 24" stroke="#1fc98a" stroke-width="2"><path d="m17 11-5-5-5 5"/><path d="m17 18-5-5-5 5"/></svg>
<div class="t" style="left:1173px;top:149.3px;font-size:21px;color:#e8e8ea;-webkit-text-stroke:0.6px #e8e8ea">191.4 mots/min</div>
<div class="abs" style="left:1344px;top:144px;width:1.5px;height:19px;background:#6b6b72"></div>
<svg class="ic" style="left:1369px;top:144px" width="28" height="28" viewBox="0 0 24 24" stroke="#eab308" stroke-width="2"><path d="M15 2H6a2 2 0 0 0-2 2v16a2 2 0 0 0 2 2h12a2 2 0 0 0 2-2V7Z"/><path d="M14 2v4a2 2 0 0 0 2 2h4"/><path d="M10 9H8"/><path d="M16 13H8"/><path d="M16 17H8"/></svg>
<div class="t" style="left:1410px;top:149.3px;font-size:21px;color:#e8e8ea;-webkit-text-stroke:0.6px #e8e8ea">45.9K mots</div>
<div class="abs" style="left:1540px;top:144px;width:1.5px;height:19px;background:#6b6b72"></div>
<svg class="ic" style="left:1566px;top:144px" width="28" height="28" viewBox="0 0 24 24" stroke="#ef4444" stroke-width="2"><path d="M12 20h.01"/><path d="M8.5 16.429a5 5 0 0 1 7 0"/><path d="M5 12.859a10 10 0 0 1 5.17-2.69"/><path d="M19 12.859a10 10 0 0 0-2.007-1.523"/><path d="M2 8.82a15 15 0 0 1 4.177-2.643"/><path d="M22 8.82a15 15 0 0 0-11.288-3.764"/><path d="m2 2 20 20"/></svg>
<div class="t" style="left:1605px;top:149.3px;font-size:21px;color:#e8e8ea;-webkit-text-stroke:0.6px #e8e8ea">13.8 GB</div>

<!-- audio card -->
<div class="t" style="left:1148px;top:336.3px;font-size:27.5px;color:#f0f0f2;-webkit-text-stroke:0.45px #f0f0f2;transform:translateX(-50%)">Entrée audio</div>
<div class="abs" style="left:740px;top:383.5px;width:816px;height:330.5px;border-radius:13px;border:1.5px solid #3a3a40;box-sizing:border-box"></div>
<svg class="abs" style="left:0;top:0" width="1920" height="1440" viewBox="0 0 1920 1440"><rect x="754.50" y="490.75" width="20.0" height="9.9" fill="#0ea5e9"/><rect x="754.50" y="504.04" width="20.0" height="9.9" fill="#0ea5e9"/><rect x="754.50" y="517.33" width="20.0" height="9.9" fill="#0ea5e9"/><rect x="754.50" y="530.62" width="20.0" height="9.9" fill="#0ea5e9"/><rect x="754.50" y="543.91" width="20.0" height="9.9" fill="#0ea5e9"/><rect x="754.50" y="557.20" width="20.0" height="9.9" fill="#0ea5e9"/><rect x="754.50" y="570.49" width="20.0" height="9.9" fill="#0ea5e9"/><rect x="777.75" y="490.75" width="20.0" height="9.9" fill="#0ea5e9"/><rect x="777.75" y="504.04" width="20.0" height="9.9" fill="#6366f1"/><rect x="777.75" y="517.33" width="20.0" height="9.9" fill="#6366f1"/><rect x="777.75" y="530.62" width="20.0" height="9.9" fill="#6366f1"/><rect x="777.75" y="543.91" width="20.0" height="9.9" fill="#6366f1"/><rect x="777.75" y="557.20" width="20.0" height="9.9" fill="#6366f1"/><rect x="777.75" y="570.49" width="20.0" height="9.9" fill="#0ea5e9"/><rect x="801.00" y="490.75" width="20.0" height="9.9" fill="#0ea5e9"/><rect x="801.00" y="504.04" width="20.0" height="9.9" fill="#6366f1"/><rect x="801.00" y="517.33" width="20.0" height="9.9" fill="#6366f1"/><rect x="801.00" y="530.62" width="20.0" height="9.9" fill="#6366f1"/><rect x="801.00" y="543.91" width="20.0" height="9.9" fill="#6366f1"/><rect x="801.00" y="557.20" width="20.0" height="9.9" fill="#6366f1"/><rect x="801.00" y="570.49" width="20.0" height="9.9" fill="#0ea5e9"/><rect x="824.25" y="477.46" width="20.0" height="9.9" fill="#0ea5e9"/><rect x="824.25" y="490.75" width="20.0" height="9.9" fill="#0ea5e9"/><rect x="824.25" y="504.04" width="20.0" height="9.9" fill="#6366f1"/><rect x="824.25" y="517.33" width="20.0" height="9.9" fill="#6366f1"/><rect x="824.25" y="530.62" width="20.0" height="9.9" fill="#6366f1"/><rect x="824.25" y="543.91" width="20.0" height="9.9" fill="#6366f1"/><rect x="824.25" y="557.20" width="20.0" height="9.9" fill="#6366f1"/><rect x="824.25" y="570.49" width="20.0" height="9.9" fill="#0ea5e9"/><rect x="824.25" y="583.78" width="20.0" height="9.9" fill="#0ea5e9"/><rect x="847.50" y="477.46" width="20.0" height="9.9" fill="#0ea5e9"/><rect x="847.50" y="490.75" width="20.0" height="9.9" fill="#0ea5e9"/><rect x="847.50" y="504.04" width="20.0" height="9.9" fill="#6366f1"/><rect x="847.50" y="517.33" width="20.0" height="9.9" fill="#6366f1"/><rect x="847.50" y="530.62" width="20.0" height="9.9" fill="#6366f1"/><rect x="847.50" y="543.91" width="20.0" height="9.9" fill="#6366f1"/><rect x="847.50" y="557.20" width="20.0" height="9.9" fill="#6366f1"/><rect x="847.50" y="570.49" width="20.0" height="9.9" fill="#0ea5e9"/><rect x="847.50" y="583.78" width="20.0" height="9.9" fill="#0ea5e9"/><rect x="870.75" y="477.46" width="20.0" height="9.9" fill="#0ea5e9"/><rect x="870.75" y="490.75" width="20.0" height="9.9" fill="#0ea5e9"/><rect x="870.75" y="504.04" width="20.0" height="9.9" fill="#6366f1"/><rect x="870.75" y="517.33" width="20.0" height="9.9" fill="#6366f1"/><rect x="870.75" y="530.62" width="20.0" height="9.9" fill="#6366f1"/><rect x="870.75" y="543.91" width="20.0" height="9.9" fill="#6366f1"/><rect x="870.75" y="557.20" width="20.0" height="9.9" fill="#6366f1"/><rect x="870.75" y="570.49" width="20.0" height="9.9" fill="#0ea5e9"/><rect x="870.75" y="583.78" width="20.0" height="9.9" fill="#0ea5e9"/><rect x="894.00" y="464.17" width="20.0" height="9.9" fill="#00ffff"/><rect x="894.00" y="477.46" width="20.0" height="9.9" fill="#0ea5e9"/><rect x="894.00" y="490.75" width="20.0" height="9.9" fill="#0ea5e9"/><rect x="894.00" y="504.04" width="20.0" height="9.9" fill="#6366f1"/><rect x="894.00" y="517.33" width="20.0" height="9.9" fill="#6366f1"/><rect x="894.00" y="530.62" width="20.0" height="9.9" fill="#6366f1"/><rect x="894.00" y="543.91" width="20.0" height="9.9" fill="#6366f1"/><rect x="894.00" y="557.20" width="20.0" height="9.9" fill="#6366f1"/><rect x="894.00" y="570.49" width="20.0" height="9.9" fill="#0ea5e9"/><rect x="894.00" y="583.78" width="20.0" height="9.9" fill="#0ea5e9"/><rect x="894.00" y="597.07" width="20.0" height="9.9" fill="#00ffff"/><rect x="917.25" y="464.17" width="20.0" height="9.9" fill="#00ffff"/><rect x="917.25" y="477.46" width="20.0" height="9.9" fill="#0ea5e9"/><rect x="917.25" y="490.75" width="20.0" height="9.9" fill="#0ea5e9"/><rect x="917.25" y="504.04" width="20.0" height="9.9" fill="#6366f1"/><rect x="917.25" y="517.33" width="20.0" height="9.9" fill="#6366f1"/><rect x="917.25" y="530.62" width="20.0" height="9.9" fill="#6366f1"/><rect x="917.25" y="543.91" width="20.0" height="9.9" fill="#6366f1"/><rect x="917.25" y="557.20" width="20.0" height="9.9" fill="#6366f1"/><rect x="917.25" y="570.49" width="20.0" height="9.9" fill="#0ea5e9"/><rect x="917.25" y="583.78" width="20.0" height="9.9" fill="#0ea5e9"/><rect x="917.25" y="597.07" width="20.0" height="9.9" fill="#00ffff"/><rect x="940.50" y="464.17" width="20.0" height="9.9" fill="#00ffff"/><rect x="940.50" y="477.46" width="20.0" height="9.9" fill="#0ea5e9"/><rect x="940.50" y="490.75" width="20.0" height="9.9" fill="#0ea5e9"/><rect x="940.50" y="504.04" width="20.0" height="9.9" fill="#6366f1"/><rect x="940.50" y="517.33" width="20.0" height="9.9" fill="#6366f1"/><rect x="940.50" y="530.62" width="20.0" height="9.9" fill="#6366f1"/><rect x="940.50" y="543.91" width="20.0" height="9.9" fill="#6366f1"/><rect x="940.50" y="557.20" width="20.0" height="9.9" fill="#6366f1"/><rect x="940.50" y="570.49" width="20.0" height="9.9" fill="#0ea5e9"/><rect x="940.50" y="583.78" width="20.0" height="9.9" fill="#0ea5e9"/><rect x="940.50" y="597.07" width="20.0" height="9.9" fill="#00ffff"/><rect x="963.75" y="464.17" width="20.0" height="9.9" fill="#00ffff"/><rect x="963.75" y="477.46" width="20.0" height="9.9" fill="#0ea5e9"/><rect x="963.75" y="490.75" width="20.0" height="9.9" fill="#0ea5e9"/><rect x="963.75" y="504.04" width="20.0" height="9.9" fill="#6366f1"/><rect x="963.75" y="517.33" width="20.0" height="9.9" fill="#6366f1"/><rect x="963.75" y="530.62" width="20.0" height="9.9" fill="#6366f1"/><rect x="963.75" y="543.91" width="20.0" height="9.9" fill="#6366f1"/><rect x="963.75" y="557.20" width="20.0" height="9.9" fill="#6366f1"/><rect x="963.75" y="570.49" width="20.0" height="9.9" fill="#0ea5e9"/><rect x="963.75" y="583.78" width="20.0" height="9.9" fill="#0ea5e9"/><rect x="963.75" y="597.07" width="20.0" height="9.9" fill="#00ffff"/><rect x="987.00" y="450.88" width="20.0" height="9.9" fill="#00ffff"/><rect x="987.00" y="464.17" width="20.0" height="9.9" fill="#00ffff"/><rect x="987.00" y="477.46" width="20.0" height="9.9" fill="#0ea5e9"/><rect x="987.00" y="490.75" width="20.0" height="9.9" fill="#0ea5e9"/><rect x="987.00" y="504.04" width="20.0" height="9.9" fill="#6366f1"/><rect x="987.00" y="517.33" width="20.0" height="9.9" fill="#6366f1"/><rect x="987.00" y="530.62" width="20.0" height="9.9" fill="#6366f1"/><rect x="987.00" y="543.91" width="20.0" height="9.9" fill="#6366f1"/><rect x="987.00" y="557.20" width="20.0" height="9.9" fill="#6366f1"/><rect x="987.00" y="570.49" width="20.0" height="9.9" fill="#0ea5e9"/><rect x="987.00" y="583.78" width="20.0" height="9.9" fill="#0ea5e9"/><rect x="987.00" y="597.07" width="20.0" height="9.9" fill="#00ffff"/><rect x="987.00" y="610.36" width="20.0" height="9.9" fill="#00ffff"/><rect x="1010.25" y="450.88" width="20.0" height="9.9" fill="#00ffff"/><rect x="1010.25" y="464.17" width="20.0" height="9.9" fill="#00ffff"/><rect x="1010.25" y="477.46" width="20.0" height="9.9" fill="#0ea5e9"/><rect x="1010.25" y="490.75" width="20.0" height="9.9" fill="#0ea5e9"/><rect x="1010.25" y="504.04" width="20.0" height="9.9" fill="#6366f1"/><rect x="1010.25" y="517.33" width="20.0" height="9.9" fill="#6366f1"/><rect x="1010.25" y="530.62" width="20.0" height="9.9" fill="#6366f1"/><rect x="1010.25" y="543.91" width="20.0" height="9.9" fill="#6366f1"/><rect x="1010.25" y="557.20" width="20.0" height="9.9" fill="#6366f1"/><rect x="1010.25" y="570.49" width="20.0" height="9.9" fill="#0ea5e9"/><rect x="1010.25" y="583.78" width="20.0" height="9.9" fill="#0ea5e9"/><rect x="1010.25" y="597.07" width="20.0" height="9.9" fill="#00ffff"/><rect x="1010.25" y="610.36" width="20.0" height="9.9" fill="#00ffff"/><rect x="1033.50" y="450.88" width="20.0" height="9.9" fill="#00ffff"/><rect x="1033.50" y="464.17" width="20.0" height="9.9" fill="#00ffff"/><rect x="1033.50" y="477.46" width="20.0" height="9.9" fill="#0ea5e9"/><rect x="1033.50" y="490.75" width="20.0" height="9.9" fill="#0ea5e9"/><rect x="1033.50" y="504.04" width="20.0" height="9.9" fill="#6366f1"/><rect x="1033.50" y="517.33" width="20.0" height="9.9" fill="#6366f1"/><rect x="1033.50" y="530.62" width="20.0" height="9.9" fill="#6366f1"/><rect x="1033.50" y="543.91" width="20.0" height="9.9" fill="#6366f1"/><rect x="1033.50" y="557.20" width="20.0" height="9.9" fill="#6366f1"/><rect x="1033.50" y="570.49" width="20.0" height="9.9" fill="#0ea5e9"/><rect x="1033.50" y="583.78" width="20.0" height="9.9" fill="#0ea5e9"/><rect x="1033.50" y="597.07" width="20.0" height="9.9" fill="#00ffff"/><rect x="1033.50" y="610.36" width="20.0" height="9.9" fill="#00ffff"/><rect x="1056.75" y="437.59" width="20.0" height="9.9" fill="#00ffff"/><rect x="1056.75" y="450.88" width="20.0" height="9.9" fill="#00ffff"/><rect x="1056.75" y="464.17" width="20.0" height="9.9" fill="#00ffff"/><rect x="1056.75" y="477.46" width="20.0" height="9.9" fill="#0ea5e9"/><rect x="1056.75" y="490.75" width="20.0" height="9.9" fill="#0ea5e9"/><rect x="1056.75" y="504.04" width="20.0" height="9.9" fill="#6366f1"/><rect x="1056.75" y="517.33" width="20.0" height="9.9" fill="#6366f1"/><rect x="1056.75" y="530.62" width="20.0" height="9.9" fill="#6366f1"/><rect x="1056.75" y="543.91" width="20.0" height="9.9" fill="#6366f1"/><rect x="1056.75" y="557.20" width="20.0" height="9.9" fill="#6366f1"/><rect x="1056.75" y="570.49" width="20.0" height="9.9" fill="#0ea5e9"/><rect x="1056.75" y="583.78" width="20.0" height="9.9" fill="#0ea5e9"/><rect x="1056.75" y="597.07" width="20.0" height="9.9" fill="#00ffff"/><rect x="1056.75" y="610.36" width="20.0" height="9.9" fill="#00ffff"/><rect x="1056.75" y="623.65" width="20.0" height="9.9" fill="#00ffff"/><rect x="1080.00" y="437.59" width="20.0" height="9.9" fill="#00ffff"/><rect x="1080.00" y="450.88" width="20.0" height="9.9" fill="#00ffff"/><rect x="1080.00" y="464.17" width="20.0" height="9.9" fill="#00ffff"/><rect x="1080.00" y="477.46" width="20.0" height="9.9" fill="#0ea5e9"/><rect x="1080.00" y="490.75" width="20.0" height="9.9" fill="#0ea5e9"/><rect x="1080.00" y="504.04" width="20.0" height="9.9" fill="#6366f1"/><rect x="1080.00" y="517.33" width="20.0" height="9.9" fill="#6366f1"/><rect x="1080.00" y="530.62" width="20.0" height="9.9" fill="#6366f1"/><rect x="1080.00" y="543.91" width="20.0" height="9.9" fill="#6366f1"/><rect x="1080.00" y="557.20" width="20.0" height="9.9" fill="#6366f1"/><rect x="1080.00" y="570.49" width="20.0" height="9.9" fill="#0ea5e9"/><rect x="1080.00" y="583.78" width="20.0" height="9.9" fill="#0ea5e9"/><rect x="1080.00" y="597.07" width="20.0" height="9.9" fill="#00ffff"/><rect x="1080.00" y="610.36" width="20.0" height="9.9" fill="#00ffff"/><rect x="1080.00" y="623.65" width="20.0" height="9.9" fill="#00ffff"/><rect x="1103.25" y="437.59" width="20.0" height="9.9" fill="#00ffff"/><rect x="1103.25" y="450.88" width="20.0" height="9.9" fill="#00ffff"/><rect x="1103.25" y="464.17" width="20.0" height="9.9" fill="#00ffff"/><rect x="1103.25" y="477.46" width="20.0" height="9.9" fill="#0ea5e9"/><rect x="1103.25" y="490.75" width="20.0" height="9.9" fill="#0ea5e9"/><rect x="1103.25" y="504.04" width="20.0" height="9.9" fill="#6366f1"/><rect x="1103.25" y="517.33" width="20.0" height="9.9" fill="#6366f1"/><rect x="1103.25" y="530.62" width="20.0" height="9.9" fill="#6366f1"/><rect x="1103.25" y="543.91" width="20.0" height="9.9" fill="#6366f1"/><rect x="1103.25" y="557.20" width="20.0" height="9.9" fill="#6366f1"/><rect x="1103.25" y="570.49" width="20.0" height="9.9" fill="#0ea5e9"/><rect x="1103.25" y="583.78" width="20.0" height="9.9" fill="#0ea5e9"/><rect x="1103.25" y="597.07" width="20.0" height="9.9" fill="#00ffff"/><rect x="1103.25" y="610.36" width="20.0" height="9.9" fill="#00ffff"/><rect x="1103.25" y="623.65" width="20.0" height="9.9" fill="#00ffff"/><rect x="1126.50" y="424.30" width="20.0" height="9.9" fill="#00ffff"/><rect x="1126.50" y="437.59" width="20.0" height="9.9" fill="#00ffff"/><rect x="1126.50" y="450.88" width="20.0" height="9.9" fill="#00ffff"/><rect x="1126.50" y="464.17" width="20.0" height="9.9" fill="#00ffff"/><rect x="1126.50" y="477.46" width="20.0" height="9.9" fill="#0ea5e9"/><rect x="1126.50" y="490.75" width="20.0" height="9.9" fill="#0ea5e9"/><rect x="1126.50" y="504.04" width="20.0" height="9.9" fill="#6366f1"/><rect x="1126.50" y="517.33" width="20.0" height="9.9" fill="#6366f1"/><rect x="1126.50" y="530.62" width="20.0" height="9.9" fill="#6366f1"/><rect x="1126.50" y="543.91" width="20.0" height="9.9" fill="#6366f1"/><rect x="1126.50" y="557.20" width="20.0" height="9.9" fill="#6366f1"/><rect x="1126.50" y="570.49" width="20.0" height="9.9" fill="#0ea5e9"/><rect x="1126.50" y="583.78" width="20.0" height="9.9" fill="#0ea5e9"/><rect x="1126.50" y="597.07" width="20.0" height="9.9" fill="#00ffff"/><rect x="1126.50" y="610.36" width="20.0" height="9.9" fill="#00ffff"/><rect x="1126.50" y="623.65" width="20.0" height="9.9" fill="#00ffff"/><rect x="1126.50" y="636.94" width="20.0" height="9.9" fill="#00ffff"/><rect x="1149.75" y="424.30" width="20.0" height="9.9" fill="#00ffff"/><rect x="1149.75" y="437.59" width="20.0" height="9.9" fill="#00ffff"/><rect x="1149.75" y="450.88" width="20.0" height="9.9" fill="#00ffff"/><rect x="1149.75" y="464.17" width="20.0" height="9.9" fill="#00ffff"/><rect x="1149.75" y="477.46" width="20.0" height="9.9" fill="#0ea5e9"/><rect x="1149.75" y="490.75" width="20.0" height="9.9" fill="#0ea5e9"/><rect x="1149.75" y="504.04" width="20.0" height="9.9" fill="#6366f1"/><rect x="1149.75" y="517.33" width="20.0" height="9.9" fill="#6366f1"/><rect x="1149.75" y="530.62" width="20.0" height="9.9" fill="#6366f1"/><rect x="1149.75" y="543.91" width="20.0" height="9.9" fill="#6366f1"/><rect x="1149.75" y="557.20" width="20.0" height="9.9" fill="#6366f1"/><rect x="1149.75" y="570.49" width="20.0" height="9.9" fill="#0ea5e9"/><rect x="1149.75" y="583.78" width="20.0" height="9.9" fill="#0ea5e9"/><rect x="1149.75" y="597.07" width="20.0" height="9.9" fill="#00ffff"/><rect x="1149.75" y="610.36" width="20.0" height="9.9" fill="#00ffff"/><rect x="1149.75" y="623.65" width="20.0" height="9.9" fill="#00ffff"/><rect x="1149.75" y="636.94" width="20.0" height="9.9" fill="#00ffff"/><rect x="1173.00" y="437.59" width="20.0" height="9.9" fill="#00ffff"/><rect x="1173.00" y="450.88" width="20.0" height="9.9" fill="#00ffff"/><rect x="1173.00" y="464.17" width="20.0" height="9.9" fill="#00ffff"/><rect x="1173.00" y="477.46" width="20.0" height="9.9" fill="#0ea5e9"/><rect x="1173.00" y="490.75" width="20.0" height="9.9" fill="#0ea5e9"/><rect x="1173.00" y="504.04" width="20.0" height="9.9" fill="#6366f1"/><rect x="1173.00" y="517.33" width="20.0" height="9.9" fill="#6366f1"/><rect x="1173.00" y="530.62" width="20.0" height="9.9" fill="#6366f1"/><rect x="1173.00" y="543.91" width="20.0" height="9.9" fill="#6366f1"/><rect x="1173.00" y="557.20" width="20.0" height="9.9" fill="#6366f1"/><rect x="1173.00" y="570.49" width="20.0" height="9.9" fill="#0ea5e9"/><rect x="1173.00" y="583.78" width="20.0" height="9.9" fill="#0ea5e9"/><rect x="1173.00" y="597.07" width="20.0" height="9.9" fill="#00ffff"/><rect x="1173.00" y="610.36" width="20.0" height="9.9" fill="#00ffff"/><rect x="1173.00" y="623.65" width="20.0" height="9.9" fill="#00ffff"/><rect x="1196.25" y="437.59" width="20.0" height="9.9" fill="#00ffff"/><rect x="1196.25" y="450.88" width="20.0" height="9.9" fill="#00ffff"/><rect x="1196.25" y="464.17" width="20.0" height="9.9" fill="#00ffff"/><rect x="1196.25" y="477.46" width="20.0" height="9.9" fill="#0ea5e9"/><rect x="1196.25" y="490.75" width="20.0" height="9.9" fill="#0ea5e9"/><rect x="1196.25" y="504.04" width="20.0" height="9.9" fill="#6366f1"/><rect x="1196.25" y="517.33" width="20.0" height="9.9" fill="#6366f1"/><rect x="1196.25" y="530.62" width="20.0" height="9.9" fill="#6366f1"/><rect x="1196.25" y="543.91" width="20.0" height="9.9" fill="#6366f1"/><rect x="1196.25" y="557.20" width="20.0" height="9.9" fill="#6366f1"/><rect x="1196.25" y="570.49" width="20.0" height="9.9" fill="#0ea5e9"/><rect x="1196.25" y="583.78" width="20.0" height="9.9" fill="#0ea5e9"/><rect x="1196.25" y="597.07" width="20.0" height="9.9" fill="#00ffff"/><rect x="1196.25" y="610.36" width="20.0" height="9.9" fill="#00ffff"/><rect x="1196.25" y="623.65" width="20.0" height="9.9" fill="#00ffff"/><rect x="1219.50" y="437.59" width="20.0" height="9.9" fill="#00ffff"/><rect x="1219.50" y="450.88" width="20.0" height="9.9" fill="#00ffff"/><rect x="1219.50" y="464.17" width="20.0" height="9.9" fill="#00ffff"/><rect x="1219.50" y="477.46" width="20.0" height="9.9" fill="#0ea5e9"/><rect x="1219.50" y="490.75" width="20.0" height="9.9" fill="#0ea5e9"/><rect x="1219.50" y="504.04" width="20.0" height="9.9" fill="#6366f1"/><rect x="1219.50" y="517.33" width="20.0" height="9.9" fill="#6366f1"/><rect x="1219.50" y="530.62" width="20.0" height="9.9" fill="#6366f1"/><rect x="1219.50" y="543.91" width="20.0" height="9.9" fill="#6366f1"/><rect x="1219.50" y="557.20" width="20.0" height="9.9" fill="#6366f1"/><rect x="1219.50" y="570.49" width="20.0" height="9.9" fill="#0ea5e9"/><rect x="1219.50" y="583.78" width="20.0" height="9.9" fill="#0ea5e9"/><rect x="1219.50" y="597.07" width="20.0" height="9.9" fill="#00ffff"/><rect x="1219.50" y="610.36" width="20.0" height="9.9" fill="#00ffff"/><rect x="1219.50" y="623.65" width="20.0" height="9.9" fill="#00ffff"/><rect x="1242.75" y="450.88" width="20.0" height="9.9" fill="#00ffff"/><rect x="1242.75" y="464.17" width="20.0" height="9.9" fill="#00ffff"/><rect x="1242.75" y="477.46" width="20.0" height="9.9" fill="#0ea5e9"/><rect x="1242.75" y="490.75" width="20.0" height="9.9" fill="#0ea5e9"/><rect x="1242.75" y="504.04" width="20.0" height="9.9" fill="#6366f1"/><rect x="1242.75" y="517.33" width="20.0" height="9.9" fill="#6366f1"/><rect x="1242.75" y="530.62" width="20.0" height="9.9" fill="#6366f1"/><rect x="1242.75" y="543.91" width="20.0" height="9.9" fill="#6366f1"/><rect x="1242.75" y="557.20" width="20.0" height="9.9" fill="#6366f1"/><rect x="1242.75" y="570.49" width="20.0" height="9.9" fill="#0ea5e9"/><rect x="1242.75" y="583.78" width="20.0" height="9.9" fill="#0ea5e9"/><rect x="1242.75" y="597.07" width="20.0" height="9.9" fill="#00ffff"/><rect x="1242.75" y="610.36" width="20.0" height="9.9" fill="#00ffff"/><rect x="1266.00" y="450.88" width="20.0" height="9.9" fill="#00ffff"/><rect x="1266.00" y="464.17" width="20.0" height="9.9" fill="#00ffff"/><rect x="1266.00" y="477.46" width="20.0" height="9.9" fill="#0ea5e9"/><rect x="1266.00" y="490.75" width="20.0" height="9.9" fill="#0ea5e9"/><rect x="1266.00" y="504.04" width="20.0" height="9.9" fill="#6366f1"/><rect x="1266.00" y="517.33" width="20.0" height="9.9" fill="#6366f1"/><rect x="1266.00" y="530.62" width="20.0" height="9.9" fill="#6366f1"/><rect x="1266.00" y="543.91" width="20.0" height="9.9" fill="#6366f1"/><rect x="1266.00" y="557.20" width="20.0" height="9.9" fill="#6366f1"/><rect x="1266.00" y="570.49" width="20.0" height="9.9" fill="#0ea5e9"/><rect x="1266.00" y="583.78" width="20.0" height="9.9" fill="#0ea5e9"/><rect x="1266.00" y="597.07" width="20.0" height="9.9" fill="#00ffff"/><rect x="1266.00" y="610.36" width="20.0" height="9.9" fill="#00ffff"/><rect x="1289.25" y="450.88" width="20.0" height="9.9" fill="#00ffff"/><rect x="1289.25" y="464.17" width="20.0" height="9.9" fill="#00ffff"/><rect x="1289.25" y="477.46" width="20.0" height="9.9" fill="#0ea5e9"/><rect x="1289.25" y="490.75" width="20.0" height="9.9" fill="#0ea5e9"/><rect x="1289.25" y="504.04" width="20.0" height="9.9" fill="#6366f1"/><rect x="1289.25" y="517.33" width="20.0" height="9.9" fill="#6366f1"/><rect x="1289.25" y="530.62" width="20.0" height="9.9" fill="#6366f1"/><rect x="1289.25" y="543.91" width="20.0" height="9.9" fill="#6366f1"/><rect x="1289.25" y="557.20" width="20.0" height="9.9" fill="#6366f1"/><rect x="1289.25" y="570.49" width="20.0" height="9.9" fill="#0ea5e9"/><rect x="1289.25" y="583.78" width="20.0" height="9.9" fill="#0ea5e9"/><rect x="1289.25" y="597.07" width="20.0" height="9.9" fill="#00ffff"/><rect x="1289.25" y="610.36" width="20.0" height="9.9" fill="#00ffff"/><rect x="1312.50" y="464.17" width="20.0" height="9.9" fill="#00ffff"/><rect x="1312.50" y="477.46" width="20.0" height="9.9" fill="#0ea5e9"/><rect x="1312.50" y="490.75" width="20.0" height="9.9" fill="#0ea5e9"/><rect x="1312.50" y="504.04" width="20.0" height="9.9" fill="#6366f1"/><rect x="1312.50" y="517.33" width="20.0" height="9.9" fill="#6366f1"/><rect x="1312.50" y="530.62" width="20.0" height="9.9" fill="#6366f1"/><rect x="1312.50" y="543.91" width="20.0" height="9.9" fill="#6366f1"/><rect x="1312.50" y="557.20" width="20.0" height="9.9" fill="#6366f1"/><rect x="1312.50" y="570.49" width="20.0" height="9.9" fill="#0ea5e9"/><rect x="1312.50" y="583.78" width="20.0" height="9.9" fill="#0ea5e9"/><rect x="1312.50" y="597.07" width="20.0" height="9.9" fill="#00ffff"/><rect x="1335.75" y="464.17" width="20.0" height="9.9" fill="#00ffff"/><rect x="1335.75" y="477.46" width="20.0" height="9.9" fill="#0ea5e9"/><rect x="1335.75" y="490.75" width="20.0" height="9.9" fill="#0ea5e9"/><rect x="1335.75" y="504.04" width="20.0" height="9.9" fill="#6366f1"/><rect x="1335.75" y="517.33" width="20.0" height="9.9" fill="#6366f1"/><rect x="1335.75" y="530.62" width="20.0" height="9.9" fill="#6366f1"/><rect x="1335.75" y="543.91" width="20.0" height="9.9" fill="#6366f1"/><rect x="1335.75" y="557.20" width="20.0" height="9.9" fill="#6366f1"/><rect x="1335.75" y="570.49" width="20.0" height="9.9" fill="#0ea5e9"/><rect x="1335.75" y="583.78" width="20.0" height="9.9" fill="#0ea5e9"/><rect x="1335.75" y="597.07" width="20.0" height="9.9" fill="#00ffff"/><rect x="1359.00" y="464.17" width="20.0" height="9.9" fill="#00ffff"/><rect x="1359.00" y="477.46" width="20.0" height="9.9" fill="#0ea5e9"/><rect x="1359.00" y="490.75" width="20.0" height="9.9" fill="#0ea5e9"/><rect x="1359.00" y="504.04" width="20.0" height="9.9" fill="#6366f1"/><rect x="1359.00" y="517.33" width="20.0" height="9.9" fill="#6366f1"/><rect x="1359.00" y="530.62" width="20.0" height="9.9" fill="#6366f1"/><rect x="1359.00" y="543.91" width="20.0" height="9.9" fill="#6366f1"/><rect x="1359.00" y="557.20" width="20.0" height="9.9" fill="#6366f1"/><rect x="1359.00" y="570.49" width="20.0" height="9.9" fill="#0ea5e9"/><rect x="1359.00" y="583.78" width="20.0" height="9.9" fill="#0ea5e9"/><rect x="1359.00" y="597.07" width="20.0" height="9.9" fill="#00ffff"/><rect x="1382.25" y="464.17" width="20.0" height="9.9" fill="#00ffff"/><rect x="1382.25" y="477.46" width="20.0" height="9.9" fill="#0ea5e9"/><rect x="1382.25" y="490.75" width="20.0" height="9.9" fill="#0ea5e9"/><rect x="1382.25" y="504.04" width="20.0" height="9.9" fill="#6366f1"/><rect x="1382.25" y="517.33" width="20.0" height="9.9" fill="#6366f1"/><rect x="1382.25" y="530.62" width="20.0" height="9.9" fill="#6366f1"/><rect x="1382.25" y="543.91" width="20.0" height="9.9" fill="#6366f1"/><rect x="1382.25" y="557.20" width="20.0" height="9.9" fill="#6366f1"/><rect x="1382.25" y="570.49" width="20.0" height="9.9" fill="#0ea5e9"/><rect x="1382.25" y="583.78" width="20.0" height="9.9" fill="#0ea5e9"/><rect x="1382.25" y="597.07" width="20.0" height="9.9" fill="#00ffff"/><rect x="1405.50" y="477.46" width="20.0" height="9.9" fill="#0ea5e9"/><rect x="1405.50" y="490.75" width="20.0" height="9.9" fill="#0ea5e9"/><rect x="1405.50" y="504.04" width="20.0" height="9.9" fill="#6366f1"/><rect x="1405.50" y="517.33" width="20.0" height="9.9" fill="#6366f1"/><rect x="1405.50" y="530.62" width="20.0" height="9.9" fill="#6366f1"/><rect x="1405.50" y="543.91" width="20.0" height="9.9" fill="#6366f1"/><rect x="1405.50" y="557.20" width="20.0" height="9.9" fill="#6366f1"/><rect x="1405.50" y="570.49" width="20.0" height="9.9" fill="#0ea5e9"/><rect x="1405.50" y="583.78" width="20.0" height="9.9" fill="#0ea5e9"/><rect x="1428.75" y="477.46" width="20.0" height="9.9" fill="#0ea5e9"/><rect x="1428.75" y="490.75" width="20.0" height="9.9" fill="#0ea5e9"/><rect x="1428.75" y="504.04" width="20.0" height="9.9" fill="#6366f1"/><rect x="1428.75" y="517.33" width="20.0" height="9.9" fill="#6366f1"/><rect x="1428.75" y="530.62" width="20.0" height="9.9" fill="#6366f1"/><rect x="1428.75" y="543.91" width="20.0" height="9.9" fill="#6366f1"/><rect x="1428.75" y="557.20" width="20.0" height="9.9" fill="#6366f1"/><rect x="1428.75" y="570.49" width="20.0" height="9.9" fill="#0ea5e9"/><rect x="1428.75" y="583.78" width="20.0" height="9.9" fill="#0ea5e9"/><rect x="1452.00" y="477.46" width="20.0" height="9.9" fill="#0ea5e9"/><rect x="1452.00" y="490.75" width="20.0" height="9.9" fill="#0ea5e9"/><rect x="1452.00" y="504.04" width="20.0" height="9.9" fill="#6366f1"/><rect x="1452.00" y="517.33" width="20.0" height="9.9" fill="#6366f1"/><rect x="1452.00" y="530.62" width="20.0" height="9.9" fill="#6366f1"/><rect x="1452.00" y="543.91" width="20.0" height="9.9" fill="#6366f1"/><rect x="1452.00" y="557.20" width="20.0" height="9.9" fill="#6366f1"/><rect x="1452.00" y="570.49" width="20.0" height="9.9" fill="#0ea5e9"/><rect x="1452.00" y="583.78" width="20.0" height="9.9" fill="#0ea5e9"/><rect x="1475.25" y="490.75" width="20.0" height="9.9" fill="#0ea5e9"/><rect x="1475.25" y="504.04" width="20.0" height="9.9" fill="#6366f1"/><rect x="1475.25" y="517.33" width="20.0" height="9.9" fill="#6366f1"/><rect x="1475.25" y="530.62" width="20.0" height="9.9" fill="#6366f1"/><rect x="1475.25" y="543.91" width="20.0" height="9.9" fill="#6366f1"/><rect x="1475.25" y="557.20" width="20.0" height="9.9" fill="#6366f1"/><rect x="1475.25" y="570.49" width="20.0" height="9.9" fill="#0ea5e9"/><rect x="1498.50" y="490.75" width="20.0" height="9.9" fill="#0ea5e9"/><rect x="1498.50" y="504.04" width="20.0" height="9.9" fill="#6366f1"/><rect x="1498.50" y="517.33" width="20.0" height="9.9" fill="#6366f1"/><rect x="1498.50" y="530.62" width="20.0" height="9.9" fill="#6366f1"/><rect x="1498.50" y="543.91" width="20.0" height="9.9" fill="#6366f1"/><rect x="1498.50" y="557.20" width="20.0" height="9.9" fill="#6366f1"/><rect x="1498.50" y="570.49" width="20.0" height="9.9" fill="#0ea5e9"/><rect x="1521.75" y="490.75" width="20.0" height="9.9" fill="#0ea5e9"/><rect x="1521.75" y="504.04" width="20.0" height="9.9" fill="#0ea5e9"/><rect x="1521.75" y="517.33" width="20.0" height="9.9" fill="#0ea5e9"/><rect x="1521.75" y="530.62" width="20.0" height="9.9" fill="#0ea5e9"/><rect x="1521.75" y="543.91" width="20.0" height="9.9" fill="#0ea5e9"/><rect x="1521.75" y="557.20" width="20.0" height="9.9" fill="#0ea5e9"/><rect x="1521.75" y="570.49" width="20.0" height="9.9" fill="#0ea5e9"/></svg>
<div class="t" style="left:755px;top:671.7px;font-size:21px;color:#a3a3ab">Appuyer sur</div>
<div class="abs" style="left:874.5px;top:667px;width:59.5px;height:33px;border-radius:9px;background:#3a3a41"></div>
<div class="t" style="left:888px;top:671.7px;font-size:21px;color:#f0f0f2;-webkit-text-stroke:0.35px #f0f0f2">Ctrl</div>
<div class="t" style="left:938px;top:671.7px;font-size:21px;color:#a3a3ab">+</div>
<div class="abs" style="left:952.5px;top:667px;width:62.5px;height:33px;border-radius:9px;background:#3a3a41"></div>
<div class="t" style="left:964px;top:671.7px;font-size:21px;color:#f0f0f2;-webkit-text-stroke:0.35px #f0f0f2">Win</div>
<div class="t" style="left:1020px;top:673.3px;font-size:21.5px;letter-spacing:0.25px;color:#a3a3ab">pour démarrer/arrêter l'enregistrement</div>

<!-- recent activity -->
<div class="t" style="left:624px;top:747.9px;font-size:28px;color:#f0f0f2;-webkit-text-stroke:0.5px #f0f0f2">Activité récente</div>
<svg class="ic" style="left:828px;top:748px" width="29" height="29" viewBox="0 0 24 24" stroke="#a1a1a8" stroke-width="1.7"><circle cx="12" cy="12" r="9.6"/><path d="M12 16v-4"/><path d="M12 8h.01"/></svg>
<svg class="ic" style="left:1646.3px;top:748.6px" width="26" height="26" viewBox="0 0 24 24" stroke="#a1a1a8" stroke-width="2"><path d="M3 6h18"/><path d="M19 6v14c0 1-1 2-2 2H7c-1 0-2-1-2-2V6"/><path d="M8 6V4c0-1 1-2 2-2h4c1 0 2 1 2 2v2"/><line x1="10" x2="10" y1="11" y2="17"/><line x1="14" x2="14" y1="11" y2="17"/></svg>

<div class="abs" style="left:624px;top:795px;width:1048.5px;height:75.5px;border-radius:13px;border:1.5px solid #3a3a40;box-sizing:border-box"></div>
<div class="abs" style="left:624px;top:885px;width:1048.5px;height:75.5px;border-radius:13px;border:1.5px solid #3a3a40;box-sizing:border-box"></div>
<div class="abs" style="left:624px;top:975px;width:1048.5px;height:75.5px;border-radius:13px;border:1.5px solid #3a3a40;box-sizing:border-box"></div>
<div class="t" style="left:645.5px;top:820.65px;font-size:24.4px;color:#a9a9b1">The software is free, open source, and auditable.</div>
<div class="t" style="left:645.5px;top:911px;font-size:24.4px;letter-spacing:0.2px;color:#a9a9b1">We do not track anything, no telemetry, no network calls.</div>
<div class="t" style="left:645.5px;top:1000.75px;font-size:24.4px;letter-spacing:0.24px;color:#a9a9b1">We protect your data and only store the absolute minimum.</div>
<div class="t" style="right:268.7px;top:818.85px;font-size:20.5px;color:#a4a4ab">Just now</div>
<div class="t" style="right:268.7px;top:908.85px;font-size:20.5px;color:#a4a4ab">Just now</div>
<div class="t" style="right:268.7px;top:998.85px;font-size:20.5px;color:#a4a4ab">Just now</div>

</body></html>
